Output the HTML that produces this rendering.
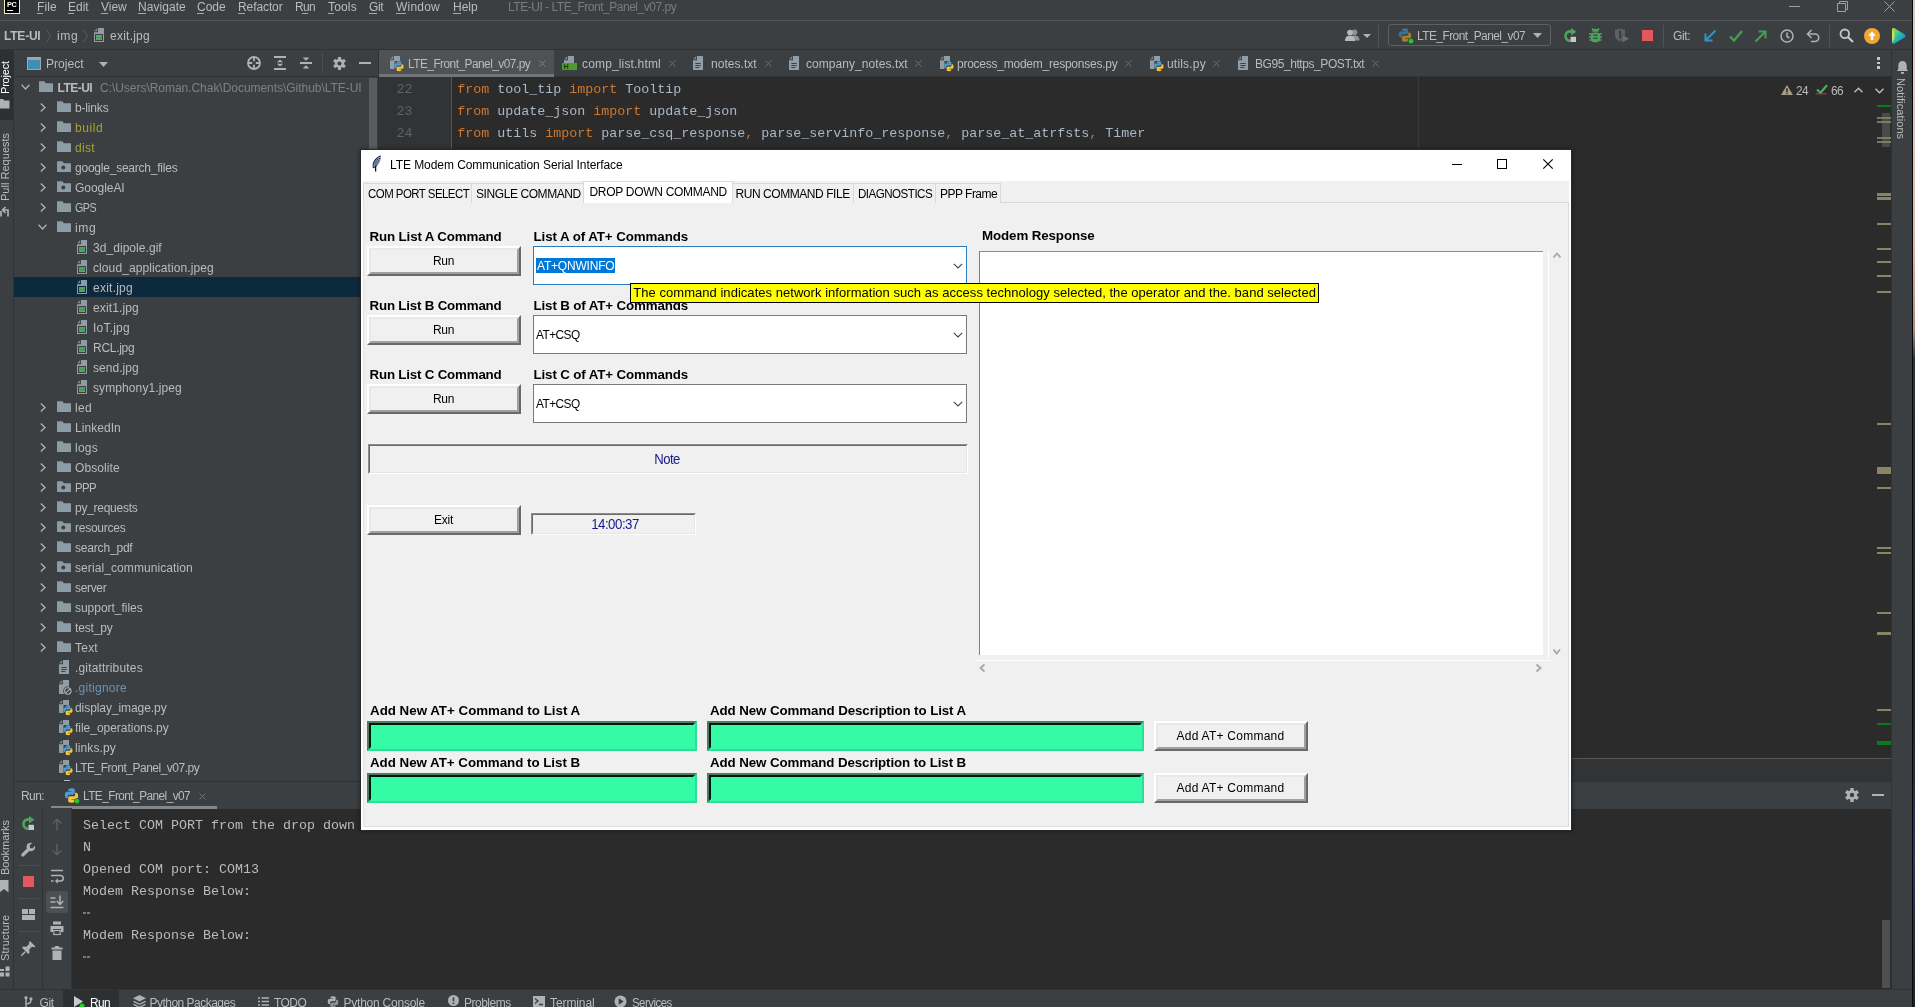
<!DOCTYPE html>
<html><head><meta charset="utf-8"><title>LTE-UI</title><style>
html,body{margin:0;padding:0;}
body{width:1915px;height:1007px;overflow:hidden;background:#3c3f41;position:relative;font-kerning:none;}
body>div,body>span,body>svg{position:absolute;box-sizing:border-box;}
div>div,div>span,div>svg{position:absolute;box-sizing:border-box;}
span{display:block;}
svg{overflow:visible;}
</style></head><body><div id="wrap" style="left:0;top:0;width:1915px;height:1007px;will-change:transform;overflow:hidden;">
<div style="left:0px;top:0px;width:1912px;height:1007px;background:#3c3f41;"></div>
<div style="left:1912px;top:0px;width:1px;height:1007px;background:#0a0a0c;"></div>
<div style="left:1913px;top:0px;width:2px;height:1007px;background:linear-gradient(#d9c9c4 0px,#e6cfc4 60px,#d8b9a8 250px,#a88a7c 330px,#2a3242 360px,#1c2434 700px,#2c3a55 860px,#1a2233 1007px);"></div>
<div style="left:0px;top:20px;width:1912px;height:1px;background:#515557;"></div>
<div style="left:0px;top:49px;width:1912px;height:1px;background:#323232;"></div>
<div style="left:4px;top:0px;width:16px;height:14px;background:#000000;border:1px solid #eeeeb4;border-top:none;"></div>
<span id="t1" style="top:-2px;font:bold 8px/13px 'Liberation Sans',sans-serif;color:#ffffff;white-space:pre;left:6.6px;letter-spacing:-0.550px;transform-origin:0 50%;transform:scaleX(0.9173);">PC</span>
<div style="left:7px;top:10px;width:6px;height:1px;background:#ffffff;"></div>
<span id="t2" style="top:-2px;font:12px/18px 'Liberation Sans',sans-serif;color:#bbbbbb;white-space:pre;left:37.0px;letter-spacing:0.119px;">File</span>
<span id="t3" style="top:-2px;font:12px/18px 'Liberation Sans',sans-serif;color:#bbbbbb;white-space:pre;left:68.0px;letter-spacing:0.004px;">Edit</span>
<span id="t4" style="top:-2px;font:12px/18px 'Liberation Sans',sans-serif;color:#bbbbbb;white-space:pre;left:101.0px;letter-spacing:-0.032px;">View</span>
<span id="t5" style="top:-2px;font:12px/18px 'Liberation Sans',sans-serif;color:#bbbbbb;white-space:pre;left:138.0px;letter-spacing:0.046px;">Navigate</span>
<span id="t6" style="top:-2px;font:12px/18px 'Liberation Sans',sans-serif;color:#bbbbbb;white-space:pre;left:197.0px;letter-spacing:0.004px;">Code</span>
<span id="t7" style="top:-2px;font:12px/18px 'Liberation Sans',sans-serif;color:#bbbbbb;white-space:pre;left:238.0px;letter-spacing:-0.094px;">Refactor</span>
<span id="t8" style="top:-2px;font:12px/18px 'Liberation Sans',sans-serif;color:#bbbbbb;white-space:pre;left:295.0px;letter-spacing:-0.550px;transform-origin:0 50%;transform:scaleX(0.9897);">Run</span>
<span id="t9" style="top:-2px;font:12px/18px 'Liberation Sans',sans-serif;color:#bbbbbb;white-space:pre;left:328.0px;letter-spacing:0.171px;">Tools</span>
<span id="t10" style="top:-2px;font:12px/18px 'Liberation Sans',sans-serif;color:#bbbbbb;white-space:pre;left:369.0px;letter-spacing:-0.322px;">Git</span>
<span id="t11" style="top:-2px;font:12px/18px 'Liberation Sans',sans-serif;color:#bbbbbb;white-space:pre;left:396.0px;letter-spacing:0.203px;">Window</span>
<span id="t12" style="top:-2px;font:12px/18px 'Liberation Sans',sans-serif;color:#bbbbbb;white-space:pre;left:453.0px;letter-spacing:0.004px;">Help</span>
<div style="left:37px;top:13px;width:6px;height:1px;background:#a8a8a8;"></div>
<div style="left:68px;top:13px;width:6px;height:1px;background:#a8a8a8;"></div>
<div style="left:101px;top:13px;width:7px;height:1px;background:#a8a8a8;"></div>
<div style="left:138px;top:13px;width:8px;height:1px;background:#a8a8a8;"></div>
<div style="left:197px;top:13px;width:7px;height:1px;background:#a8a8a8;"></div>
<div style="left:238px;top:13px;width:7px;height:1px;background:#a8a8a8;"></div>
<div style="left:302px;top:13px;width:6px;height:1px;background:#a8a8a8;"></div>
<div style="left:328px;top:13px;width:6px;height:1px;background:#a8a8a8;"></div>
<div style="left:369px;top:13px;width:8px;height:1px;background:#a8a8a8;"></div>
<div style="left:396px;top:13px;width:10px;height:1px;background:#a8a8a8;"></div>
<div style="left:453px;top:13px;width:8px;height:1px;background:#a8a8a8;"></div>
<span id="t13" style="top:-2px;font:12px/18px 'Liberation Sans',sans-serif;color:#787c7f;white-space:pre;left:508.0px;letter-spacing:-0.476px;">LTE-UI - LTE_Front_Panel_v07.py</span>
<div style="left:1789px;top:6px;width:11px;height:1px;background:#9da0a2;"></div>
<svg style="left:1837px;top:1px;" width="11" height="11" viewBox="0 0 11 11"><path d="M0.5 2.5h8v8h-8z M2.5 2.5v-2h8v8h-2" fill="none" stroke="#9da0a2" stroke-width="1"/></svg>
<svg style="left:1884px;top:1px;" width="11" height="11" viewBox="0 0 11 11"><path d="M0.5 0.5l10 10M10.5 0.5l-10 10" fill="none" stroke="#9da0a2" stroke-width="1"/></svg>
<span id="t14" style="top:27px;font:bold 12px/18px 'Liberation Sans',sans-serif;color:#bbbbbb;white-space:pre;left:4.0px;letter-spacing:-0.216px;">LTE-UI</span>
<svg style="left:46px;top:29px;" width="6" height="14" viewBox="0 0 6 14"><path d="M0.5 0.5l4 6.5l-4 6.5" fill="none" stroke="#5a5d5f" stroke-width="1"/></svg>
<span id="t15" style="top:27px;font:12px/18px 'Liberation Sans',sans-serif;color:#bbbbbb;white-space:pre;left:57.0px;letter-spacing:0.550px;transform-origin:0 50%;transform:scaleX(1.0125);">img</span>
<svg style="left:83px;top:29px;" width="6" height="14" viewBox="0 0 6 14"><path d="M0.5 0.5l4 6.5l-4 6.5" fill="none" stroke="#5a5d5f" stroke-width="1"/></svg>
<svg style="left:94px;top:28px;" width="10" height="14" viewBox="0 0 10 14"><path d="M4 0h6v14h-10v-9.700h4z" fill="#9aa7b0" fill-opacity=".9"/><path d="M0 3.300l3.200-3.200v3.200z" fill="#9aa7b0" fill-opacity=".65"/><rect x="1" y="6" width="8" height="7" fill="#3c3f41"/><rect x="2" y="7" width="6" height="5" fill="#59a869"/><path d="M2 10.200l1.500-1l1.500 0.800l1.500-1.200l1.500 0.600v0.900h-6z" fill="#3c8a55"/></svg>
<span id="t16" style="top:27px;font:12px/18px 'Liberation Sans',sans-serif;color:#bbbbbb;white-space:pre;left:110.0px;letter-spacing:0.238px;">exit.jpg</span>
<svg style="left:1345px;top:28.8px;" width="15" height="12" viewBox="0 0 15 12"><circle cx="9.5" cy="3.2" r="2.8" fill="#8e9294"/><path d="M4.5 11.5c0-4 2-5 5-5s5 1 5 5z" fill="#8e9294"/><circle cx="5" cy="3.6" r="2.9" fill="#b6b9bb"/><path d="M0 12c0-4 2-5.2 5-5.2s5 1.2 5 5.2z" fill="#b6b9bb"/></svg>
<svg style="left:1363px;top:34px;" width="8" height="4" viewBox="0 0 8 4"><path d="M0 0h8l-4 4z" fill="#afb1b3"/></svg>
<div style="left:1378px;top:25px;width:1px;height:22px;background:#515355;"></div>
<div style="left:1388px;top:24px;width:163px;height:22px;border:1px solid #5e6162;border-radius:3px;"></div>
<svg style="left:1398px;top:28px;" width="14" height="14" viewBox="0 0 14 14"><path d="M6.9 0.3c-3 0-2.9 1.3-2.9 1.3v1.4h3v0.5h-4.2s-2-0.2-2 3c0 3.100 1.800 3 1.800 3h1v-1.500s-0.100-1.800 1.800-1.800h3s1.700 0 1.700-1.700v-2.700s0.300-1.500-3.200-1.500z" fill="#3f6f93"/><path d="M7.100 13.700c3 0 2.900-1.300 2.900-1.300v-1.400h-3v-0.500h4.200s2 0.200 2-3c0-3.100-1.800-3-1.800-3h-1v1.500s0.100 1.800-1.800 1.800h-3s-1.700 0-1.700 1.700v2.700s-0.300 1.500 3.200 1.500z" fill="#a87d30"/></svg>
<svg style="left:1408px;top:38px;" width="6" height="6" viewBox="0 0 6 6"><circle cx="3" cy="3" r="2.6" fill="#25d125" stroke="#2b4a2b" stroke-width=".6"/></svg>
<span id="t17" style="top:27px;font:12px/18px 'Liberation Sans',sans-serif;color:#bbbbbb;white-space:pre;left:1417.0px;letter-spacing:-0.550px;transform-origin:0 50%;transform:scaleX(0.9946);">LTE_Front_Panel_v07</span>
<svg style="left:1533px;top:33px;" width="9" height="5" viewBox="0 0 9 5"><path d="M0 0h9l-4.500 5z" fill="#afb1b3"/></svg>
<svg style="left:1563px;top:28px;" width="14" height="14" viewBox="0 0 14 14"><path d="M8.500 3.600a4.700 4.700 0 1 0 -1 9.200" fill="none" stroke="#4fa260" stroke-width="2.600"/><path d="M8 0l5.500 3.700l-5.500 3.700z" fill="#4fa260"/><rect x="7.500" y="8.800" width="5.500" height="5.200" fill="#c4c7c9"/></svg>
<svg style="left:1588.5px;top:28px;" width="13" height="15" viewBox="0 0 13 15"><path d="M3.500 3.800a3 3 0 0 1 6 0z" fill="#4fa260"/><rect x="1.800" y="4.600" width="9.400" height="9.600" rx="4" fill="#4fa260"/><path d="M0 6h13M0 9h13M0.500 12h12M3 0.500l1.500 2M10 0.500l-1.500 2" stroke="#4fa260" stroke-width="1.500" fill="none"/><path d="M4.300 7.300h4.400M4.300 10.300h4.400" stroke="#2d5a37" stroke-width="1.500"/></svg>
<svg style="left:1614px;top:28px;" width="16" height="15" viewBox="0 0 16 15"><path d="M1 2l5-1.500l5 1.500v5c0 3-2 5-5 6.500c-3-1.500-5-3.500-5-6.500z" fill="#5e6163"/><rect x="5" y="2.500" width="2.200" height="8" fill="#3c3f41"/><path d="M8 6.500l7.500 4.200l-7.500 4.200z" fill="#6b6e70" stroke="#3c3f41" stroke-width=".6"/></svg>
<div style="left:1642px;top:30px;width:10.5px;height:10.5px;background:#e5575d;"></div>
<div style="left:1663px;top:25px;width:1px;height:22px;background:#515355;"></div>
<span id="t18" style="top:27px;font:12px/18px 'Liberation Sans',sans-serif;color:#bbbbbb;white-space:pre;left:1673.0px;letter-spacing:-0.324px;">Git:</span>
<svg style="left:1703px;top:29px;" width="14" height="14" viewBox="0 0 14 14"><path d="M12.500 1.500l-10 10M2.500 4.500v7h7" fill="none" stroke="#3592c4" stroke-width="2"/></svg>
<svg style="left:1729px;top:29px;" width="14" height="14" viewBox="0 0 14 14"><path d="M1 7.500l4 4l8-9.500" fill="none" stroke="#499c54" stroke-width="2.200"/></svg>
<svg style="left:1754px;top:29px;" width="14" height="14" viewBox="0 0 14 14"><path d="M1.500 12.500l10-10M4.500 2.500h7v7" fill="none" stroke="#499c54" stroke-width="2"/></svg>
<svg style="left:1780px;top:29px;" width="14" height="14" viewBox="0 0 14 14"><circle cx="7" cy="7" r="6" fill="none" stroke="#afb1b3" stroke-width="1.500"/><path d="M7 3.500v4l2.500 1.500" fill="none" stroke="#afb1b3" stroke-width="1.500"/></svg>
<svg style="left:1806px;top:29px;" width="14" height="14" viewBox="0 0 14 14"><path d="M2 5h7a3.700 3.700 0 0 1 0 7.500h-4" fill="none" stroke="#afb1b3" stroke-width="1.600"/><path d="M5.500 1l-4 4l4 4" fill="none" stroke="#afb1b3" stroke-width="1.600"/></svg>
<div style="left:1829px;top:25px;width:1px;height:22px;background:#515355;"></div>
<svg style="left:1839px;top:28px;" width="15" height="15" viewBox="0 0 15 15"><circle cx="5.800" cy="5.800" r="4.300" fill="none" stroke="#c4c6c7" stroke-width="1.800"/><path d="M9 9l5 5" stroke="#c4c6c7" stroke-width="2.200"/></svg>
<svg style="left:1864px;top:28px;" width="16" height="16" viewBox="0 0 16 16"><circle cx="8" cy="8" r="8" fill="#f0a732"/><path d="M8 3.500l4 4.200h-2.700v4.300h-2.600v-4.300h-2.700z" fill="#fff"/></svg>
<svg style="left:1891px;top:28px;" width="15" height="16" viewBox="0 0 15 16"><defs><linearGradient id="jg" x1="0" y1="0" x2="1" y2="1"><stop offset="0" stop-color="#b8e04a"/><stop offset=".45" stop-color="#21c5a0"/><stop offset="1" stop-color="#2a6df0"/></linearGradient></defs><path d="M1 1.500c0-1.500 1.500-1.800 2.500-1.200l10 6c1.200 0.700 1.200 2.400 0 3.100l-10 6c-1 0.600-2.500 0.300-2.500-1.200z" fill="url(#jg)"/><path d="M1 1.500c3 2 4 10 0 12.700z" fill="#ffe14d" fill-opacity=".75"/></svg>
<div style="left:0px;top:50px;width:14px;height:940px;background:#3c3f41;"></div>
<div style="left:13px;top:50px;width:1px;height:940px;background:#323232;"></div>
<div style="left:14px;top:50px;width:365px;height:27px;background:#3c3f41;"></div>
<svg style="left:27px;top:57px;" width="14" height="13" viewBox="0 0 14 13"><rect x="0.5" y="0.5" width="13" height="12" fill="#3d8fb5" stroke="#9aa7b0" stroke-width="1"/><rect x="0.5" y="0.5" width="13" height="2.500" fill="#9aa7b0"/></svg>
<span id="t19" style="top:55px;font:12px/18px 'Liberation Sans',sans-serif;color:#bbbbbb;white-space:pre;left:46.0px;letter-spacing:0.057px;">Project</span>
<svg style="left:99px;top:62px;" width="9" height="5" viewBox="0 0 9 5"><path d="M0 0h9l-4.500 5z" fill="#afb1b3"/></svg>
<svg style="left:247px;top:56px;" width="14" height="14" viewBox="0 0 14 14"><circle cx="7" cy="7" r="6" fill="none" stroke="#afb1b3" stroke-width="1.800"/><path d="M7 1v4.200M7 8.800v4.200M1 7h4.200M8.800 7h4.200" stroke="#afb1b3" stroke-width="1.800"/></svg>
<svg style="left:274px;top:56px;" width="12" height="14" viewBox="0 0 12 14"><path d="M0 1h12M0 13h12" stroke="#afb1b3" stroke-width="2"/><path d="M6 3.500l3.200 2.800h-6.400z M6 10.500l3.200-2.800h-6.400z" fill="#afb1b3"/></svg>
<svg style="left:300px;top:56px;" width="12" height="14" viewBox="0 0 12 14"><path d="M0 7h12" stroke="#afb1b3" stroke-width="2"/><path d="M6 4.800l3.300-3.300h-6.600z M6 9.200l3.300 3.300h-6.600z" fill="#afb1b3"/></svg>
<div style="left:322px;top:53px;width:1px;height:20px;background:#4b4e50;"></div>
<svg style="left:332.5px;top:56.5px;" width="13" height="13" viewBox="0 0 14 14"><g transform="translate(7 7)"><g fill="#afb1b3"><rect x="-1.700" y="-7" width="3.400" height="14" rx=".5"/><rect x="-1.700" y="-7" width="3.400" height="14" rx=".5" transform="rotate(60)"/><rect x="-1.700" y="-7" width="3.400" height="14" rx=".5" transform="rotate(120)"/><circle r="5"/></g><circle r="2.200" fill="#3c3f41"/></g></svg>
<div style="left:359px;top:62px;width:12px;height:2px;background:#afb1b3;"></div>
<div style="left:14px;top:76px;width:365px;height:1px;background:#323232;"></div>
<div style="left:14px;top:77px;width:355px;height:704px;background:#3c3f41;"></div>
<div style="left:14px;top:277px;width:347px;height:20px;background:#0d293e;"></div>
<div style="left:369px;top:78px;width:8px;height:703px;background:#595b5d;"></div>
<div style="left:378px;top:50px;width:1px;height:731px;background:#323232;"></div>
<svg style="left:21px;top:83.8px;" width="9" height="6" viewBox="0 0 9 6"><path d="M0.600 0.800l3.900 4.200l3.900-4.200" fill="none" stroke="#afb1b3" stroke-width="1.300"/></svg>
<svg style="left:39px;top:81.2px;" width="14" height="11" viewBox="0 0 14 11"><path d="M0 0.300h5.300l1.600 1.900h7.100v8.800h-14z" fill="#8d9ba5"/></svg>
<span id="t20" style="top:79px;font:bold 12px/18px 'Liberation Sans',sans-serif;color:#bbbbbb;white-space:pre;left:57.5px;letter-spacing:-0.516px;">LTE-UI</span>
<span id="t21" style="top:79px;font:12px/18px 'Liberation Sans',sans-serif;color:#7d8184;white-space:pre;left:100.0px;letter-spacing:-0.036px;">C:\Users\Roman.Chak\Documents\Github\LTE-UI</span>
<svg style="left:39.5px;top:102.8px;" width="6" height="9" viewBox="0 0 6 9"><path d="M0.800 0.600l4.200 3.900l-4.200 3.900" fill="none" stroke="#afb1b3" stroke-width="1.300"/></svg>
<svg style="left:57px;top:101.2px;" width="14" height="11" viewBox="0 0 14 11"><path d="M0 0.300h5.300l1.600 1.900h7.100v8.800h-14z" fill="#8d9ba5"/></svg>
<span id="t22" style="top:99px;font:12px/18px 'Liberation Sans',sans-serif;color:#bbbbbb;white-space:pre;left:75.0px;letter-spacing:-0.165px;">b-links</span>
<svg style="left:39.5px;top:122.8px;" width="6" height="9" viewBox="0 0 6 9"><path d="M0.800 0.600l4.200 3.900l-4.200 3.900" fill="none" stroke="#afb1b3" stroke-width="1.300"/></svg>
<svg style="left:57px;top:121.2px;" width="14" height="11" viewBox="0 0 14 11"><path d="M0 0.300h5.300l1.600 1.900h7.100v8.800h-14z" fill="#8d9ba5"/></svg>
<span id="t23" style="top:119px;font:12px/18px 'Liberation Sans',sans-serif;color:#a7a32f;white-space:pre;left:75.0px;letter-spacing:0.550px;transform-origin:0 50%;transform:scaleX(1.0051);">build</span>
<svg style="left:39.5px;top:142.8px;" width="6" height="9" viewBox="0 0 6 9"><path d="M0.800 0.600l4.200 3.900l-4.200 3.900" fill="none" stroke="#afb1b3" stroke-width="1.300"/></svg>
<svg style="left:57px;top:141.2px;" width="14" height="11" viewBox="0 0 14 11"><path d="M0 0.300h5.300l1.600 1.900h7.100v8.800h-14z" fill="#8d9ba5"/></svg>
<span id="t24" style="top:139px;font:12px/18px 'Liberation Sans',sans-serif;color:#a7a32f;white-space:pre;left:75.0px;letter-spacing:0.337px;">dist</span>
<svg style="left:39.5px;top:162.8px;" width="6" height="9" viewBox="0 0 6 9"><path d="M0.800 0.600l4.200 3.900l-4.200 3.900" fill="none" stroke="#afb1b3" stroke-width="1.300"/></svg>
<svg style="left:57px;top:161.2px;" width="14" height="11" viewBox="0 0 14 11"><path d="M0 0.300h5.300l1.600 1.900h7.100v8.800h-14z" fill="#8d9ba5"/><circle cx="6.300" cy="6.600" r="2" fill="#3c3f41"/></svg>
<span id="t25" style="top:159px;font:12px/18px 'Liberation Sans',sans-serif;color:#bbbbbb;white-space:pre;left:75.0px;letter-spacing:-0.225px;">google_search_files</span>
<svg style="left:39.5px;top:182.8px;" width="6" height="9" viewBox="0 0 6 9"><path d="M0.800 0.600l4.200 3.900l-4.200 3.900" fill="none" stroke="#afb1b3" stroke-width="1.300"/></svg>
<svg style="left:57px;top:181.2px;" width="14" height="11" viewBox="0 0 14 11"><path d="M0 0.300h5.300l1.600 1.900h7.100v8.800h-14z" fill="#8d9ba5"/><circle cx="6.300" cy="6.600" r="2" fill="#3c3f41"/></svg>
<span id="t26" style="top:179px;font:12px/18px 'Liberation Sans',sans-serif;color:#bbbbbb;white-space:pre;left:75.0px;letter-spacing:-0.050px;">GoogleAI</span>
<svg style="left:39.5px;top:202.8px;" width="6" height="9" viewBox="0 0 6 9"><path d="M0.800 0.600l4.200 3.900l-4.200 3.900" fill="none" stroke="#afb1b3" stroke-width="1.300"/></svg>
<svg style="left:57px;top:201.2px;" width="14" height="11" viewBox="0 0 14 11"><path d="M0 0.300h5.300l1.600 1.900h7.100v8.800h-14z" fill="#8d9ba5"/></svg>
<span id="t27" style="top:199px;font:12px/18px 'Liberation Sans',sans-serif;color:#bbbbbb;white-space:pre;left:75.0px;letter-spacing:-0.550px;transform-origin:0 50%;transform:scaleX(0.8951);">GPS</span>
<svg style="left:37.5px;top:224.10000000000002px;" width="9" height="6" viewBox="0 0 9 6"><path d="M0.600 0.800l3.900 4.200l3.900-4.200" fill="none" stroke="#afb1b3" stroke-width="1.300"/></svg>
<svg style="left:57px;top:221.2px;" width="14" height="11" viewBox="0 0 14 11"><path d="M0 0.300h5.300l1.600 1.900h7.100v8.800h-14z" fill="#8d9ba5"/></svg>
<span id="t28" style="top:219px;font:12px/18px 'Liberation Sans',sans-serif;color:#bbbbbb;white-space:pre;left:75.0px;letter-spacing:0.550px;transform-origin:0 50%;transform:scaleX(1.0125);">img</span>
<svg style="left:77px;top:240px;" width="10" height="14" viewBox="0 0 10 14"><path d="M4 0h6v14h-10v-9.700h4z" fill="#9aa7b0" fill-opacity=".9"/><path d="M0 3.300l3.200-3.200v3.200z" fill="#9aa7b0" fill-opacity=".65"/><rect x="1" y="6" width="8" height="7" fill="#3c3f41"/><rect x="2" y="7" width="6" height="5" fill="#59a869"/><path d="M2 10.200l1.500-1l1.500 0.800l1.500-1.200l1.500 0.600v0.900h-6z" fill="#3c8a55"/><path d="M2.500 8h2M5.500 8h2" stroke="#3f8f5a" stroke-width=".8"/></svg>
<span id="t29" style="top:239px;font:12px/18px 'Liberation Sans',sans-serif;color:#bbbbbb;white-space:pre;left:93.0px;letter-spacing:0.053px;">3d_dipole.gif</span>
<svg style="left:77px;top:260px;" width="10" height="14" viewBox="0 0 10 14"><path d="M4 0h6v14h-10v-9.700h4z" fill="#9aa7b0" fill-opacity=".9"/><path d="M0 3.300l3.200-3.200v3.200z" fill="#9aa7b0" fill-opacity=".65"/><rect x="1" y="6" width="8" height="7" fill="#3c3f41"/><rect x="2" y="7" width="6" height="5" fill="#59a869"/><path d="M2 10.200l1.500-1l1.500 0.800l1.500-1.200l1.500 0.600v0.900h-6z" fill="#3c8a55"/><path d="M2.500 8h2M5.500 8h2" stroke="#3f8f5a" stroke-width=".8"/></svg>
<span id="t30" style="top:259px;font:12px/18px 'Liberation Sans',sans-serif;color:#bbbbbb;white-space:pre;left:93.0px;letter-spacing:0.092px;">cloud_application.jpeg</span>
<svg style="left:77px;top:280px;" width="10" height="14" viewBox="0 0 10 14"><path d="M4 0h6v14h-10v-9.700h4z" fill="#9aa7b0" fill-opacity=".9"/><path d="M0 3.300l3.200-3.200v3.200z" fill="#9aa7b0" fill-opacity=".65"/><rect x="1" y="6" width="8" height="7" fill="#0d293e"/><rect x="2" y="7" width="6" height="5" fill="#59a869"/><path d="M2 10.200l1.500-1l1.500 0.800l1.500-1.200l1.500 0.600v0.900h-6z" fill="#3c8a55"/><path d="M2.500 8h2M5.500 8h2" stroke="#3f8f5a" stroke-width=".8"/></svg>
<span id="t31" style="top:279px;font:12px/18px 'Liberation Sans',sans-serif;color:#bbbbbb;white-space:pre;left:93.0px;letter-spacing:0.238px;">exit.jpg</span>
<svg style="left:77px;top:300px;" width="10" height="14" viewBox="0 0 10 14"><path d="M4 0h6v14h-10v-9.700h4z" fill="#9aa7b0" fill-opacity=".9"/><path d="M0 3.300l3.200-3.200v3.200z" fill="#9aa7b0" fill-opacity=".65"/><rect x="1" y="6" width="8" height="7" fill="#3c3f41"/><rect x="2" y="7" width="6" height="5" fill="#59a869"/><path d="M2 10.200l1.500-1l1.500 0.800l1.500-1.200l1.500 0.600v0.900h-6z" fill="#3c8a55"/><path d="M2.500 8h2M5.500 8h2" stroke="#3f8f5a" stroke-width=".8"/></svg>
<span id="t32" style="top:299px;font:12px/18px 'Liberation Sans',sans-serif;color:#bbbbbb;white-space:pre;left:93.0px;letter-spacing:0.125px;">exit1.jpg</span>
<svg style="left:77px;top:320px;" width="10" height="14" viewBox="0 0 10 14"><path d="M4 0h6v14h-10v-9.700h4z" fill="#9aa7b0" fill-opacity=".9"/><path d="M0 3.300l3.200-3.200v3.200z" fill="#9aa7b0" fill-opacity=".65"/><rect x="1" y="6" width="8" height="7" fill="#3c3f41"/><rect x="2" y="7" width="6" height="5" fill="#59a869"/><path d="M2 10.200l1.500-1l1.500 0.800l1.500-1.200l1.500 0.600v0.900h-6z" fill="#3c8a55"/><path d="M2.500 8h2M5.500 8h2" stroke="#3f8f5a" stroke-width=".8"/></svg>
<span id="t33" style="top:319px;font:12px/18px 'Liberation Sans',sans-serif;color:#bbbbbb;white-space:pre;left:93.0px;letter-spacing:0.223px;">IoT.jpg</span>
<svg style="left:77px;top:340px;" width="10" height="14" viewBox="0 0 10 14"><path d="M4 0h6v14h-10v-9.700h4z" fill="#9aa7b0" fill-opacity=".9"/><path d="M0 3.300l3.200-3.200v3.200z" fill="#9aa7b0" fill-opacity=".65"/><rect x="1" y="6" width="8" height="7" fill="#3c3f41"/><rect x="2" y="7" width="6" height="5" fill="#59a869"/><path d="M2 10.200l1.500-1l1.500 0.800l1.500-1.200l1.500 0.600v0.900h-6z" fill="#3c8a55"/><path d="M2.500 8h2M5.500 8h2" stroke="#3f8f5a" stroke-width=".8"/></svg>
<span id="t34" style="top:339px;font:12px/18px 'Liberation Sans',sans-serif;color:#bbbbbb;white-space:pre;left:93.0px;letter-spacing:-0.277px;">RCL.jpg</span>
<svg style="left:77px;top:360px;" width="10" height="14" viewBox="0 0 10 14"><path d="M4 0h6v14h-10v-9.700h4z" fill="#9aa7b0" fill-opacity=".9"/><path d="M0 3.300l3.200-3.200v3.200z" fill="#9aa7b0" fill-opacity=".65"/><rect x="1" y="6" width="8" height="7" fill="#3c3f41"/><rect x="2" y="7" width="6" height="5" fill="#59a869"/><path d="M2 10.200l1.500-1l1.500 0.800l1.500-1.200l1.500 0.600v0.900h-6z" fill="#3c8a55"/><path d="M2.500 8h2M5.500 8h2" stroke="#3f8f5a" stroke-width=".8"/></svg>
<span id="t35" style="top:359px;font:12px/18px 'Liberation Sans',sans-serif;color:#bbbbbb;white-space:pre;left:93.0px;letter-spacing:0.046px;">send.jpg</span>
<svg style="left:77px;top:380px;" width="10" height="14" viewBox="0 0 10 14"><path d="M4 0h6v14h-10v-9.700h4z" fill="#9aa7b0" fill-opacity=".9"/><path d="M0 3.300l3.200-3.200v3.200z" fill="#9aa7b0" fill-opacity=".65"/><rect x="1" y="6" width="8" height="7" fill="#3c3f41"/><rect x="2" y="7" width="6" height="5" fill="#59a869"/><path d="M2 10.200l1.500-1l1.500 0.800l1.500-1.200l1.500 0.600v0.900h-6z" fill="#3c8a55"/><path d="M2.500 8h2M5.500 8h2" stroke="#3f8f5a" stroke-width=".8"/></svg>
<span id="t36" style="top:379px;font:12px/18px 'Liberation Sans',sans-serif;color:#bbbbbb;white-space:pre;left:93.0px;letter-spacing:0.101px;">symphony1.jpeg</span>
<svg style="left:39.5px;top:402.8px;" width="6" height="9" viewBox="0 0 6 9"><path d="M0.800 0.600l4.200 3.900l-4.200 3.900" fill="none" stroke="#afb1b3" stroke-width="1.300"/></svg>
<svg style="left:57px;top:401.2px;" width="14" height="11" viewBox="0 0 14 11"><path d="M0 0.300h5.300l1.600 1.900h7.100v8.800h-14z" fill="#8d9ba5"/></svg>
<span id="t37" style="top:399px;font:12px/18px 'Liberation Sans',sans-serif;color:#bbbbbb;white-space:pre;left:75.0px;letter-spacing:0.342px;">led</span>
<svg style="left:39.5px;top:422.8px;" width="6" height="9" viewBox="0 0 6 9"><path d="M0.800 0.600l4.200 3.900l-4.200 3.900" fill="none" stroke="#afb1b3" stroke-width="1.300"/></svg>
<svg style="left:57px;top:421.2px;" width="14" height="11" viewBox="0 0 14 11"><path d="M0 0.300h5.300l1.600 1.900h7.100v8.800h-14z" fill="#8d9ba5"/></svg>
<span id="t38" style="top:419px;font:12px/18px 'Liberation Sans',sans-serif;color:#bbbbbb;white-space:pre;left:75.0px;letter-spacing:0.046px;">LinkedIn</span>
<svg style="left:39.5px;top:442.8px;" width="6" height="9" viewBox="0 0 6 9"><path d="M0.800 0.600l4.200 3.900l-4.200 3.900" fill="none" stroke="#afb1b3" stroke-width="1.300"/></svg>
<svg style="left:57px;top:441.2px;" width="14" height="11" viewBox="0 0 14 11"><path d="M0 0.300h5.300l1.600 1.900h7.100v8.800h-14z" fill="#8d9ba5"/></svg>
<span id="t39" style="top:439px;font:12px/18px 'Liberation Sans',sans-serif;color:#bbbbbb;white-space:pre;left:75.0px;letter-spacing:0.228px;">logs</span>
<svg style="left:39.5px;top:462.8px;" width="6" height="9" viewBox="0 0 6 9"><path d="M0.800 0.600l4.200 3.900l-4.200 3.900" fill="none" stroke="#afb1b3" stroke-width="1.300"/></svg>
<svg style="left:57px;top:461.2px;" width="14" height="11" viewBox="0 0 14 11"><path d="M0 0.300h5.300l1.600 1.900h7.100v8.800h-14z" fill="#8d9ba5"/></svg>
<span id="t40" style="top:459px;font:12px/18px 'Liberation Sans',sans-serif;color:#bbbbbb;white-space:pre;left:75.0px;letter-spacing:0.096px;">Obsolite</span>
<svg style="left:39.5px;top:482.8px;" width="6" height="9" viewBox="0 0 6 9"><path d="M0.800 0.600l4.200 3.900l-4.200 3.900" fill="none" stroke="#afb1b3" stroke-width="1.300"/></svg>
<svg style="left:57px;top:481.2px;" width="14" height="11" viewBox="0 0 14 11"><path d="M0 0.300h5.300l1.600 1.900h7.100v8.800h-14z" fill="#8d9ba5"/><circle cx="6.300" cy="6.600" r="2" fill="#3c3f41"/></svg>
<span id="t41" style="top:479px;font:12px/18px 'Liberation Sans',sans-serif;color:#bbbbbb;white-space:pre;left:75.0px;letter-spacing:-0.550px;transform-origin:0 50%;transform:scaleX(0.9470);">PPP</span>
<svg style="left:39.5px;top:502.8px;" width="6" height="9" viewBox="0 0 6 9"><path d="M0.800 0.600l4.200 3.900l-4.200 3.900" fill="none" stroke="#afb1b3" stroke-width="1.300"/></svg>
<svg style="left:57px;top:501.2px;" width="14" height="11" viewBox="0 0 14 11"><path d="M0 0.300h5.300l1.600 1.900h7.100v8.800h-14z" fill="#8d9ba5"/></svg>
<span id="t42" style="top:499px;font:12px/18px 'Liberation Sans',sans-serif;color:#bbbbbb;white-space:pre;left:75.0px;letter-spacing:-0.267px;">py_requests</span>
<svg style="left:39.5px;top:522.8px;" width="6" height="9" viewBox="0 0 6 9"><path d="M0.800 0.600l4.200 3.900l-4.200 3.900" fill="none" stroke="#afb1b3" stroke-width="1.300"/></svg>
<svg style="left:57px;top:521.2px;" width="14" height="11" viewBox="0 0 14 11"><path d="M0 0.300h5.300l1.600 1.900h7.100v8.800h-14z" fill="#8d9ba5"/><circle cx="6.300" cy="6.600" r="2" fill="#3c3f41"/></svg>
<span id="t43" style="top:519px;font:12px/18px 'Liberation Sans',sans-serif;color:#bbbbbb;white-space:pre;left:75.0px;letter-spacing:-0.248px;">resources</span>
<svg style="left:39.5px;top:542.8px;" width="6" height="9" viewBox="0 0 6 9"><path d="M0.800 0.600l4.200 3.900l-4.200 3.900" fill="none" stroke="#afb1b3" stroke-width="1.300"/></svg>
<svg style="left:57px;top:541.2px;" width="14" height="11" viewBox="0 0 14 11"><path d="M0 0.300h5.300l1.600 1.900h7.100v8.800h-14z" fill="#8d9ba5"/></svg>
<span id="t44" style="top:539px;font:12px/18px 'Liberation Sans',sans-serif;color:#bbbbbb;white-space:pre;left:75.0px;letter-spacing:-0.186px;">search_pdf</span>
<svg style="left:39.5px;top:562.8px;" width="6" height="9" viewBox="0 0 6 9"><path d="M0.800 0.600l4.200 3.900l-4.200 3.900" fill="none" stroke="#afb1b3" stroke-width="1.300"/></svg>
<svg style="left:57px;top:561.2px;" width="14" height="11" viewBox="0 0 14 11"><path d="M0 0.300h5.300l1.600 1.900h7.100v8.800h-14z" fill="#8d9ba5"/><circle cx="6.300" cy="6.600" r="2" fill="#3c3f41"/></svg>
<span id="t45" style="top:559px;font:12px/18px 'Liberation Sans',sans-serif;color:#bbbbbb;white-space:pre;left:75.0px;letter-spacing:0.086px;">serial_communication</span>
<svg style="left:39.5px;top:582.8px;" width="6" height="9" viewBox="0 0 6 9"><path d="M0.800 0.600l4.200 3.900l-4.200 3.900" fill="none" stroke="#afb1b3" stroke-width="1.300"/></svg>
<svg style="left:57px;top:581.2px;" width="14" height="11" viewBox="0 0 14 11"><path d="M0 0.300h5.300l1.600 1.900h7.100v8.800h-14z" fill="#8d9ba5"/></svg>
<span id="t46" style="top:579px;font:12px/18px 'Liberation Sans',sans-serif;color:#bbbbbb;white-space:pre;left:75.0px;letter-spacing:-0.329px;">server</span>
<svg style="left:39.5px;top:602.8px;" width="6" height="9" viewBox="0 0 6 9"><path d="M0.800 0.600l4.200 3.900l-4.200 3.900" fill="none" stroke="#afb1b3" stroke-width="1.300"/></svg>
<svg style="left:57px;top:601.2px;" width="14" height="11" viewBox="0 0 14 11"><path d="M0 0.300h5.300l1.600 1.900h7.100v8.800h-14z" fill="#8d9ba5"/></svg>
<span id="t47" style="top:599px;font:12px/18px 'Liberation Sans',sans-serif;color:#bbbbbb;white-space:pre;left:75.0px;letter-spacing:-0.029px;">support_files</span>
<svg style="left:39.5px;top:622.8px;" width="6" height="9" viewBox="0 0 6 9"><path d="M0.800 0.600l4.200 3.900l-4.200 3.900" fill="none" stroke="#afb1b3" stroke-width="1.300"/></svg>
<svg style="left:57px;top:621.2px;" width="14" height="11" viewBox="0 0 14 11"><path d="M0 0.300h5.300l1.600 1.900h7.100v8.800h-14z" fill="#8d9ba5"/></svg>
<span id="t48" style="top:619px;font:12px/18px 'Liberation Sans',sans-serif;color:#bbbbbb;white-space:pre;left:75.0px;letter-spacing:-0.167px;">test_py</span>
<svg style="left:39.5px;top:642.8px;" width="6" height="9" viewBox="0 0 6 9"><path d="M0.800 0.600l4.200 3.900l-4.200 3.900" fill="none" stroke="#afb1b3" stroke-width="1.300"/></svg>
<svg style="left:57px;top:641.2px;" width="14" height="11" viewBox="0 0 14 11"><path d="M0 0.300h5.300l1.600 1.900h7.100v8.800h-14z" fill="#8d9ba5"/></svg>
<span id="t49" style="top:639px;font:12px/18px 'Liberation Sans',sans-serif;color:#bbbbbb;white-space:pre;left:75.0px;letter-spacing:0.228px;">Text</span>
<svg style="left:59px;top:660px;" width="10" height="14" viewBox="0 0 10 14"><path d="M4 0h6v14h-10v-9.700h4z" fill="#9aa7b0" fill-opacity=".9"/><path d="M0 3.300l3.200-3.200v3.200z" fill="#9aa7b0" fill-opacity=".65"/><path d="M2.300 7.500h5.400M2.300 9.500h5.400M2.300 11.500h4" stroke="#3c3f41" stroke-width="1"/></svg>
<span id="t50" style="top:659px;font:12px/18px 'Liberation Sans',sans-serif;color:#bbbbbb;white-space:pre;left:75.0px;letter-spacing:0.179px;">.gitattributes</span>
<svg style="left:59px;top:680px;" width="14" height="16" viewBox="0 0 14 16"><path d="M4 0h6v14h-10v-9.700h4z" fill="#9aa7b0" fill-opacity=".9"/><path d="M0 3.300l3.200-3.200v3.200z" fill="#9aa7b0" fill-opacity=".65"/><circle cx="8.800" cy="11" r="4.600" fill="#3c3f41"/><circle cx="8.800" cy="11" r="3.200" fill="none" stroke="#a9b3ba" stroke-width="1.100"/><path d="M6.600 13.200l4.400-4.400" stroke="#a9b3ba" stroke-width="1.100"/></svg>
<span id="t51" style="top:679px;font:12px/18px 'Liberation Sans',sans-serif;color:#6c93b5;white-space:pre;left:75.0px;letter-spacing:0.258px;">.gitignore</span>
<svg style="left:59px;top:700px;" width="14" height="16" viewBox="0 0 14 16"><path d="M4 0h6v5h-5.500v8h-4.500v-8.700h4z" fill="#9aa7b0" fill-opacity=".9"/><path d="M0 3.300l3.200-3.200v3.200z" fill="#9aa7b0" fill-opacity=".65"/><g transform="translate(3.800 5) scale(.74)"><path d="M6.900 0.300c-3 0-2.900 1.300-2.900 1.300v1.400h3v0.500h-4.200s-2-0.200-2 3c0 3.100 1.800 3 1.800 3h1v-1.500s-0.100-1.800 1.800-1.800h3s1.700 0 1.700-1.700v-2.700s0.300-1.500-3.200-1.500z" fill="#4d9ad4"/><path d="M7.100 13.700c3 0 2.900-1.300 2.900-1.300v-1.400h-3v-0.500h4.200s2 0.200 2-3c0-3.100-1.800-3-1.800-3h-1v1.500s0.100 1.800-1.800 1.800h-3s-1.700 0-1.700 1.700v2.700s-0.300 1.500 3.200 1.500z" fill="#f2c83a"/></g></svg>
<span id="t52" style="top:699px;font:12px/18px 'Liberation Sans',sans-serif;color:#bbbbbb;white-space:pre;left:75.0px;letter-spacing:-0.068px;">display_image.py</span>
<svg style="left:59px;top:720px;" width="14" height="16" viewBox="0 0 14 16"><path d="M4 0h6v5h-5.500v8h-4.500v-8.700h4z" fill="#9aa7b0" fill-opacity=".9"/><path d="M0 3.300l3.200-3.200v3.200z" fill="#9aa7b0" fill-opacity=".65"/><g transform="translate(3.800 5) scale(.74)"><path d="M6.900 0.300c-3 0-2.900 1.300-2.900 1.300v1.400h3v0.500h-4.200s-2-0.200-2 3c0 3.100 1.800 3 1.800 3h1v-1.500s-0.100-1.800 1.800-1.800h3s1.700 0 1.700-1.700v-2.700s0.300-1.500-3.200-1.500z" fill="#4d9ad4"/><path d="M7.100 13.700c3 0 2.900-1.300 2.900-1.300v-1.400h-3v-0.500h4.200s2 0.200 2-3c0-3.100-1.800-3-1.800-3h-1v1.500s0.100 1.800-1.800 1.800h-3s-1.700 0-1.700 1.700v2.700s-0.300 1.500 3.200 1.500z" fill="#f2c83a"/></g></svg>
<span id="t53" style="top:719px;font:12px/18px 'Liberation Sans',sans-serif;color:#bbbbbb;white-space:pre;left:75.0px;letter-spacing:-0.021px;">file_operations.py</span>
<svg style="left:59px;top:740px;" width="14" height="16" viewBox="0 0 14 16"><path d="M4 0h6v5h-5.500v8h-4.500v-8.700h4z" fill="#9aa7b0" fill-opacity=".9"/><path d="M0 3.300l3.200-3.200v3.200z" fill="#9aa7b0" fill-opacity=".65"/><g transform="translate(3.800 5) scale(.74)"><path d="M6.900 0.300c-3 0-2.900 1.300-2.900 1.300v1.400h3v0.500h-4.200s-2-0.200-2 3c0 3.100 1.800 3 1.800 3h1v-1.500s-0.100-1.800 1.800-1.800h3s1.700 0 1.700-1.700v-2.700s0.300-1.500-3.200-1.500z" fill="#4d9ad4"/><path d="M7.100 13.700c3 0 2.900-1.300 2.900-1.300v-1.400h-3v-0.500h4.200s2 0.200 2-3c0-3.100-1.800-3-1.800-3h-1v1.500s0.100 1.800-1.800 1.800h-3s-1.700 0-1.700 1.700v2.700s-0.300 1.500 3.200 1.500z" fill="#f2c83a"/></g></svg>
<span id="t54" style="top:739px;font:12px/18px 'Liberation Sans',sans-serif;color:#bbbbbb;white-space:pre;left:75.0px;letter-spacing:0.098px;">links.py</span>
<svg style="left:59px;top:760px;" width="14" height="16" viewBox="0 0 14 16"><path d="M4 0h6v5h-5.500v8h-4.500v-8.700h4z" fill="#9aa7b0" fill-opacity=".9"/><path d="M0 3.300l3.200-3.200v3.200z" fill="#9aa7b0" fill-opacity=".65"/><g transform="translate(3.800 5) scale(.74)"><path d="M6.900 0.300c-3 0-2.900 1.300-2.900 1.300v1.400h3v0.500h-4.200s-2-0.200-2 3c0 3.100 1.800 3 1.800 3h1v-1.500s-0.100-1.800 1.800-1.800h3s1.700 0 1.700-1.700v-2.700s0.300-1.500-3.200-1.500z" fill="#4d9ad4"/><path d="M7.100 13.700c3 0 2.900-1.300 2.900-1.300v-1.400h-3v-0.500h4.200s2 0.200 2-3c0-3.100-1.800-3-1.800-3h-1v1.500s0.100 1.800-1.800 1.800h-3s-1.700 0-1.700 1.700v2.700s-0.300 1.500 3.200 1.500z" fill="#f2c83a"/></g></svg>
<span id="t55" style="top:759px;font:12px/18px 'Liberation Sans',sans-serif;color:#bbbbbb;white-space:pre;left:75.0px;letter-spacing:-0.500px;">LTE_Front_Panel_v07.py</span>
<div style="left:379px;top:50px;width:1513px;height:27px;background:#3c3f41;"></div>
<div style="left:379px;top:76px;width:1513px;height:1px;background:#323232;"></div>
<div style="left:379px;top:50px;width:175px;height:27px;background:#4e5254;"></div>
<div style="left:379px;top:74px;width:175px;height:3px;background:#71757a;"></div>
<svg style="left:390px;top:56px;" width="14" height="16" viewBox="0 0 14 16"><path d="M4 0h6v5h-5.500v8h-4.500v-8.700h4z" fill="#9aa7b0" fill-opacity=".9"/><path d="M0 3.300l3.200-3.200v3.200z" fill="#9aa7b0" fill-opacity=".65"/><g transform="translate(3.800 5) scale(.74)"><path d="M6.900 0.300c-3 0-2.900 1.300-2.900 1.300v1.400h3v0.500h-4.200s-2-0.200-2 3c0 3.100 1.800 3 1.800 3h1v-1.500s-0.100-1.800 1.800-1.800h3s1.700 0 1.700-1.700v-2.700s0.300-1.500-3.200-1.500z" fill="#4d9ad4"/><path d="M7.100 13.700c3 0 2.900-1.300 2.900-1.300v-1.400h-3v-0.500h4.200s2 0.200 2-3c0-3.100-1.800-3-1.800-3h-1v1.500s0.100 1.800-1.800 1.800h-3s-1.700 0-1.700 1.700v2.700s-0.300 1.500 3.200 1.500z" fill="#f2c83a"/></g></svg>
<span id="t56" style="top:55px;font:12px/18px 'Liberation Sans',sans-serif;color:#bbbbbb;white-space:pre;left:407.5px;letter-spacing:-0.550px;transform-origin:0 50%;transform:scaleX(0.9923);">LTE_Front_Panel_v07.py</span>
<svg style="left:538.5px;top:60.0px;" width="7" height="7" viewBox="0 0 7 7"><path d="M0.500 0.500l6 6M6.500 0.500l-6 6" stroke="#7e8284" stroke-width="1"/></svg>
<svg style="left:562px;top:56px;" width="15" height="14" viewBox="0 0 15 14"><path d="M6 0h6v7h-10v-2.700h4z" fill="#9aa7b0" fill-opacity=".9"/><path d="M2 3.300l3.200-3.200v3.200z" fill="#9aa7b0" fill-opacity=".65"/><rect x="0" y="7" width="15" height="7" fill="#4e9a2d"/><path d="M2.500 8.300v4.400M5.700 8.300v4.400M2.500 10.500h3.200" stroke="#1e3a12" stroke-width="1.100"/></svg>
<span id="t57" style="top:55px;font:12px/18px 'Liberation Sans',sans-serif;color:#bbbbbb;white-space:pre;left:582.0px;letter-spacing:0.155px;">comp_list.html</span>
<svg style="left:668.5px;top:60.0px;" width="7" height="7" viewBox="0 0 7 7"><path d="M0.500 0.500l6 6M6.500 0.500l-6 6" stroke="#6e7072" stroke-width="1"/></svg>
<svg style="left:693px;top:56px;" width="10" height="14" viewBox="0 0 10 14"><path d="M4 0h6v14h-10v-9.700h4z" fill="#9aa7b0" fill-opacity=".9"/><path d="M0 3.300l3.200-3.200v3.200z" fill="#9aa7b0" fill-opacity=".65"/><path d="M2.300 7.500h5.400M2.300 9.500h5.400M2.300 11.500h4" stroke="#3c3f41" stroke-width="1"/></svg>
<span id="t58" style="top:55px;font:12px/18px 'Liberation Sans',sans-serif;color:#bbbbbb;white-space:pre;left:711.0px;letter-spacing:0.043px;">notes.txt</span>
<svg style="left:764.5px;top:60.0px;" width="7" height="7" viewBox="0 0 7 7"><path d="M0.500 0.500l6 6M6.500 0.500l-6 6" stroke="#6e7072" stroke-width="1"/></svg>
<svg style="left:789px;top:56px;" width="10" height="14" viewBox="0 0 10 14"><path d="M4 0h6v14h-10v-9.700h4z" fill="#9aa7b0" fill-opacity=".9"/><path d="M0 3.300l3.200-3.200v3.200z" fill="#9aa7b0" fill-opacity=".65"/><path d="M2.300 7.500h5.400M2.300 9.500h5.400M2.300 11.500h4" stroke="#3c3f41" stroke-width="1"/></svg>
<span id="t59" style="top:55px;font:12px/18px 'Liberation Sans',sans-serif;color:#bbbbbb;white-space:pre;left:806.0px;letter-spacing:0.060px;">company_notes.txt</span>
<svg style="left:914.5px;top:60.0px;" width="7" height="7" viewBox="0 0 7 7"><path d="M0.500 0.500l6 6M6.500 0.500l-6 6" stroke="#6e7072" stroke-width="1"/></svg>
<svg style="left:940px;top:56px;" width="14" height="16" viewBox="0 0 14 16"><path d="M4 0h6v5h-5.500v8h-4.500v-8.700h4z" fill="#9aa7b0" fill-opacity=".9"/><path d="M0 3.300l3.200-3.200v3.200z" fill="#9aa7b0" fill-opacity=".65"/><g transform="translate(3.800 5) scale(.74)"><path d="M6.900 0.300c-3 0-2.900 1.300-2.900 1.300v1.400h3v0.500h-4.200s-2-0.200-2 3c0 3.100 1.800 3 1.800 3h1v-1.500s-0.100-1.800 1.800-1.800h3s1.700 0 1.700-1.700v-2.700s0.300-1.500-3.200-1.500z" fill="#4d9ad4"/><path d="M7.100 13.700c3 0 2.900-1.300 2.900-1.300v-1.400h-3v-0.500h4.200s2 0.200 2-3c0-3.100-1.800-3-1.800-3h-1v1.500s0.100 1.800-1.800 1.800h-3s-1.700 0-1.700 1.700v2.700s-0.300 1.500 3.200 1.500z" fill="#f2c83a"/></g></svg>
<span id="t60" style="top:55px;font:12px/18px 'Liberation Sans',sans-serif;color:#bbbbbb;white-space:pre;left:957.0px;letter-spacing:-0.243px;">process_modem_responses.py</span>
<svg style="left:1125.0px;top:60.0px;" width="7" height="7" viewBox="0 0 7 7"><path d="M0.500 0.500l6 6M6.500 0.500l-6 6" stroke="#6e7072" stroke-width="1"/></svg>
<svg style="left:1150px;top:56px;" width="14" height="16" viewBox="0 0 14 16"><path d="M4 0h6v5h-5.500v8h-4.500v-8.700h4z" fill="#9aa7b0" fill-opacity=".9"/><path d="M0 3.300l3.200-3.200v3.200z" fill="#9aa7b0" fill-opacity=".65"/><g transform="translate(3.800 5) scale(.74)"><path d="M6.900 0.300c-3 0-2.900 1.300-2.900 1.300v1.400h3v0.500h-4.200s-2-0.200-2 3c0 3.100 1.800 3 1.800 3h1v-1.500s-0.100-1.800 1.800-1.800h3s1.700 0 1.700-1.700v-2.700s0.300-1.500-3.200-1.500z" fill="#4d9ad4"/><path d="M7.100 13.700c3 0 2.900-1.300 2.900-1.300v-1.400h-3v-0.500h4.200s2 0.200 2-3c0-3.100-1.800-3-1.800-3h-1v1.500s0.100 1.800-1.800 1.800h-3s-1.700 0-1.700 1.700v2.700s-0.300 1.500 3.200 1.500z" fill="#f2c83a"/></g></svg>
<span id="t61" style="top:55px;font:12px/18px 'Liberation Sans',sans-serif;color:#bbbbbb;white-space:pre;left:1167.0px;letter-spacing:0.192px;">utils.py</span>
<svg style="left:1212.5px;top:60.0px;" width="7" height="7" viewBox="0 0 7 7"><path d="M0.500 0.500l6 6M6.500 0.500l-6 6" stroke="#6e7072" stroke-width="1"/></svg>
<svg style="left:1238px;top:56px;" width="10" height="14" viewBox="0 0 10 14"><path d="M4 0h6v14h-10v-9.700h4z" fill="#9aa7b0" fill-opacity=".9"/><path d="M0 3.300l3.200-3.200v3.200z" fill="#9aa7b0" fill-opacity=".65"/><path d="M2.300 7.500h5.400M2.300 9.500h5.400M2.300 11.500h4" stroke="#3c3f41" stroke-width="1"/></svg>
<span id="t62" style="top:55px;font:12px/18px 'Liberation Sans',sans-serif;color:#bbbbbb;white-space:pre;left:1255.0px;letter-spacing:-0.428px;">BG95_https_POST.txt</span>
<svg style="left:1371.5px;top:60.0px;" width="7" height="7" viewBox="0 0 7 7"><path d="M0.500 0.500l6 6M6.500 0.500l-6 6" stroke="#6e7072" stroke-width="1"/></svg>
<div style="left:1877.3px;top:57px;width:2.8px;height:2.8px;background:#c3c5c6;"></div>
<div style="left:1877.3px;top:61.5px;width:2.8px;height:2.8px;background:#c3c5c6;"></div>
<div style="left:1877.3px;top:66px;width:2.8px;height:2.8px;background:#c3c5c6;"></div>
<div style="left:379px;top:77px;width:1513px;height:681px;background:#2b2b2b;"></div>
<div style="left:379px;top:77px;width:72px;height:681px;background:#313335;"></div>
<div style="left:451px;top:77px;width:1px;height:681px;background:#555555;"></div>
<div style="left:1418px;top:77px;width:1px;height:681px;background:#393939;"></div>
<span id="t63" style="top:80px;font:13.33px/19px 'Liberation Mono',monospace;color:#606366;white-space:pre;left:412.5px;transform:translateX(-100%);">22</span>
<span id="t64" style="top:80px;font:13.33px/19px 'Liberation Mono',monospace;color:#cc7832;white-space:pre;left:457.3px;">from</span>
<span id="t65" style="top:80px;font:13.33px/19px 'Liberation Mono',monospace;color:#a9b7c6;white-space:pre;left:489.3px;"> tool_tip </span>
<span id="t66" style="top:80px;font:13.33px/19px 'Liberation Mono',monospace;color:#cc7832;white-space:pre;left:569.3px;">import</span>
<span id="t67" style="top:80px;font:13.33px/19px 'Liberation Mono',monospace;color:#a9b7c6;white-space:pre;left:617.3px;"> Tooltip</span>
<span id="t68" style="top:102px;font:13.33px/19px 'Liberation Mono',monospace;color:#606366;white-space:pre;left:412.5px;transform:translateX(-100%);">23</span>
<span id="t69" style="top:102px;font:13.33px/19px 'Liberation Mono',monospace;color:#cc7832;white-space:pre;left:457.3px;">from</span>
<span id="t70" style="top:102px;font:13.33px/19px 'Liberation Mono',monospace;color:#a9b7c6;white-space:pre;left:489.3px;"> update_json </span>
<span id="t71" style="top:102px;font:13.33px/19px 'Liberation Mono',monospace;color:#cc7832;white-space:pre;left:593.3px;">import</span>
<span id="t72" style="top:102px;font:13.33px/19px 'Liberation Mono',monospace;color:#a9b7c6;white-space:pre;left:641.3px;"> update_json</span>
<span id="t73" style="top:124px;font:13.33px/19px 'Liberation Mono',monospace;color:#606366;white-space:pre;left:412.5px;transform:translateX(-100%);">24</span>
<span id="t74" style="top:124px;font:13.33px/19px 'Liberation Mono',monospace;color:#cc7832;white-space:pre;left:457.3px;">from</span>
<span id="t75" style="top:124px;font:13.33px/19px 'Liberation Mono',monospace;color:#a9b7c6;white-space:pre;left:489.3px;"> utils </span>
<span id="t76" style="top:124px;font:13.33px/19px 'Liberation Mono',monospace;color:#cc7832;white-space:pre;left:545.3px;">import</span>
<span id="t77" style="top:124px;font:13.33px/19px 'Liberation Mono',monospace;color:#a9b7c6;white-space:pre;left:593.3px;"> parse_csq_response</span>
<span id="t78" style="top:124px;font:13.33px/19px 'Liberation Mono',monospace;color:#cc7832;white-space:pre;left:745.3px;">,</span>
<span id="t79" style="top:124px;font:13.33px/19px 'Liberation Mono',monospace;color:#a9b7c6;white-space:pre;left:753.3px;"> parse_servinfo_response</span>
<span id="t80" style="top:124px;font:13.33px/19px 'Liberation Mono',monospace;color:#cc7832;white-space:pre;left:945.3px;">,</span>
<span id="t81" style="top:124px;font:13.33px/19px 'Liberation Mono',monospace;color:#a9b7c6;white-space:pre;left:953.3px;"> parse_at_atrfsts</span>
<span id="t82" style="top:124px;font:13.33px/19px 'Liberation Mono',monospace;color:#cc7832;white-space:pre;left:1089.3px;">,</span>
<span id="t83" style="top:124px;font:13.33px/19px 'Liberation Mono',monospace;color:#a9b7c6;white-space:pre;left:1097.3px;"> Timer</span>
<svg style="left:1781px;top:85px;" width="12" height="10" viewBox="0 0 12 10"><path d="M6 0l6 10h-12z" fill="#a59d84"/><path d="M6 3.300v3.700" stroke="#2b2b2b" stroke-width="1.500"/><rect x="5.250" y="7.800" width="1.500" height="1.300" fill="#2b2b2b"/></svg>
<span id="t84" style="top:82px;font:12px/18px 'Liberation Sans',sans-serif;color:#bbbbbb;white-space:pre;left:1796.0px;letter-spacing:-0.550px;transform-origin:0 50%;transform:scaleX(0.9915);">24</span>
<svg style="left:1816px;top:84px;" width="12" height="12" viewBox="0 0 12 12"><path d="M1 5.500l3.500 3.200l6.500-7.500" fill="none" stroke="#49b257" stroke-width="2.200"/><path d="M0 10.500l1.500-1.500l1.500 1.500l1.500-1.500l1.500 1.500l1.500-1.500l1.500 1.500l1.500-1.500" fill="none" stroke="#e0464f" stroke-width=".9"/></svg>
<span id="t85" style="top:82px;font:12px/18px 'Liberation Sans',sans-serif;color:#bbbbbb;white-space:pre;left:1831.0px;letter-spacing:-0.550px;transform-origin:0 50%;transform:scaleX(0.9915);">66</span>
<svg style="left:1854px;top:87px;" width="9" height="6" viewBox="0 0 9 6"><path d="M0.500 5.300l4-4l4 4" fill="none" stroke="#bbbbbb" stroke-width="1.500"/></svg>
<svg style="left:1875px;top:88px;" width="9" height="6" viewBox="0 0 9 6"><path d="M0.500 0.700l4 4l4-4" fill="none" stroke="#bbbbbb" stroke-width="1.500"/></svg>
<div style="left:1882px;top:113px;width:8px;height:34px;background:#4a4a4a;"></div>
<div style="left:1877px;top:105px;width:14px;height:2px;background:#0a7a1f;"></div>
<div style="left:1877px;top:117px;width:14px;height:2px;background:#8a8467;opacity:.85;"></div>
<div style="left:1877px;top:121px;width:14px;height:2px;background:#8a8467;opacity:.85;"></div>
<div style="left:1877px;top:137px;width:14px;height:2px;background:#8a8467;opacity:.85;"></div>
<div style="left:1877px;top:141px;width:14px;height:2px;background:#8a8467;opacity:.85;"></div>
<div style="left:1877px;top:193px;width:14px;height:3px;background:#8a8467;"></div>
<div style="left:1877px;top:196.5px;width:14px;height:3px;background:#8a8467;"></div>
<div style="left:1877px;top:223px;width:14px;height:2px;background:#8a8467;"></div>
<div style="left:1877px;top:248px;width:14px;height:2px;background:#8a8467;"></div>
<div style="left:1877px;top:261px;width:14px;height:2px;background:#8a8467;"></div>
<div style="left:1877px;top:275px;width:14px;height:2px;background:#8a8467;"></div>
<div style="left:1877px;top:291px;width:14px;height:2px;background:#8a8467;"></div>
<div style="left:1877px;top:423px;width:14px;height:2px;background:#8a8467;"></div>
<div style="left:1877px;top:467px;width:14px;height:7px;background:#8a8467;"></div>
<div style="left:1877px;top:487px;width:14px;height:2px;background:#8a8467;"></div>
<div style="left:1877px;top:547px;width:14px;height:2px;background:#8a8467;"></div>
<div style="left:1877px;top:552px;width:14px;height:2px;background:#8a8467;"></div>
<div style="left:1877px;top:612px;width:14px;height:2px;background:#8a8467;"></div>
<div style="left:1877px;top:632px;width:14px;height:3px;background:#8a8467;"></div>
<div style="left:1877px;top:709px;width:14px;height:2px;background:#8a8467;"></div>
<div style="left:1877px;top:723px;width:14px;height:2px;background:#0a7a1f;"></div>
<div style="left:1877px;top:741px;width:14px;height:4px;background:#0a7a1f;"></div>
<div style="left:379px;top:758px;width:1513px;height:1px;background:#555555;"></div>
<div style="left:379px;top:759px;width:1513px;height:22px;background:#313335;"></div>
<div style="left:14px;top:781px;width:1878px;height:1px;background:#323232;"></div>
<div style="left:14px;top:782px;width:1878px;height:26px;background:#3c3f41;"></div>
<span id="t86" style="top:787px;font:12px/18px 'Liberation Sans',sans-serif;color:#bbbbbb;white-space:pre;left:20.5px;letter-spacing:-0.550px;transform-origin:0 50%;transform:scaleX(0.9996);">Run:</span>
<svg style="left:64px;top:788px;" width="15" height="15" viewBox="0 0 14 14"><path d="M6.900 0.300c-3 0-2.900 1.300-2.900 1.300v1.400h3v0.500h-4.200s-2-0.200-2 3c0 3.100 1.800 3 1.800 3h1v-1.500s-0.100-1.800 1.800-1.800h3s1.700 0 1.700-1.700v-2.700s0.300-1.500-3.200-1.500z" fill="#4d9ad4"/><path d="M7.100 13.700c3 0 2.900-1.300 2.900-1.300v-1.400h-3v-0.500h4.200s2 0.200 2-3c0-3.100-1.800-3-1.800-3h-1v1.500s0.100 1.800-1.800 1.800h-3s-1.700 0-1.700 1.700v2.700s-0.300 1.500 3.200 1.500z" fill="#f2c83a"/></svg>
<div style="left:64px;top:779.5px;width:6px;height:1.5px;background:#b9bec2;"></div>
<svg style="left:74px;top:798px;" width="6" height="6" viewBox="0 0 6 6"><circle cx="3" cy="3" r="2.600" fill="#25d125" stroke="#2b4a2b" stroke-width=".6"/></svg>
<span id="t87" style="top:787px;font:12px/18px 'Liberation Sans',sans-serif;color:#bbbbbb;white-space:pre;left:82.8px;letter-spacing:-0.550px;transform-origin:0 50%;transform:scaleX(0.9855);">LTE_Front_Panel_v07</span>
<svg style="left:198.5px;top:792.5px;" width="7" height="7" viewBox="0 0 7 7"><path d="M0.500 0.500l6 6M6.500 0.500l-6 6" stroke="#6e7072" stroke-width="1"/></svg>
<div style="left:51px;top:806px;width:166px;height:3px;background:#83878a;"></div>
<svg style="left:1845px;top:788px;" width="14" height="14" viewBox="0 0 14 14"><g transform="translate(7 7)"><g fill="#afb1b3"><rect x="-1.700" y="-7" width="3.400" height="14" rx=".5"/><rect x="-1.700" y="-7" width="3.400" height="14" rx=".5" transform="rotate(60)"/><rect x="-1.700" y="-7" width="3.400" height="14" rx=".5" transform="rotate(120)"/><circle r="5"/></g><circle r="2.200" fill="#3c3f41"/></g></svg>
<div style="left:1872px;top:794px;width:12px;height:2px;background:#afb1b3;"></div>
<div style="left:72px;top:809px;width:1820px;height:180px;background:#2b2b2b;"></div>
<div style="left:14px;top:808px;width:29px;height:181px;background:#3c3f41;"></div>
<div style="left:42px;top:808px;width:1px;height:181px;background:#323232;"></div>
<div style="left:43px;top:808px;width:28px;height:181px;background:#3c3f41;"></div>
<div style="left:71px;top:808px;width:1px;height:181px;background:#323232;"></div>
<span id="t88" style="top:816px;font:13.33px/19px 'Liberation Mono',monospace;color:#bbbbbb;white-space:pre;left:83px;">Select COM PORT from the drop down</span>
<span id="t89" style="top:838px;font:13.33px/19px 'Liberation Mono',monospace;color:#bbbbbb;white-space:pre;left:83px;">N</span>
<span id="t90" style="top:860px;font:13.33px/19px 'Liberation Mono',monospace;color:#bbbbbb;white-space:pre;left:83px;">Opened COM port: COM13</span>
<span id="t91" style="top:882px;font:13.33px/19px 'Liberation Mono',monospace;color:#bbbbbb;white-space:pre;left:83px;">Modem Response Below:</span>
<div style="left:83px;top:911.6px;width:3px;height:2px;background:#77797b;"></div>
<div style="left:87px;top:911.6px;width:3px;height:2px;background:#77797b;"></div>
<span id="t92" style="top:926px;font:13.33px/19px 'Liberation Mono',monospace;color:#bbbbbb;white-space:pre;left:83px;">Modem Response Below:</span>
<div style="left:83px;top:955.6px;width:3px;height:2px;background:#77797b;"></div>
<div style="left:87px;top:955.6px;width:3px;height:2px;background:#77797b;"></div>
<div style="left:1882px;top:920px;width:8px;height:68px;background:#4d4f50;"></div>
<svg style="left:21px;top:816px;" width="14" height="14" viewBox="0 0 14 14"><path d="M8.500 3.600a4.700 4.700 0 1 0 -1 9.200" fill="none" stroke="#4fa260" stroke-width="2.600"/><path d="M8 0l5.500 3.700l-5.500 3.700z" fill="#4fa260"/><rect x="7.500" y="8.800" width="5.500" height="5.200" fill="#c4c7c9"/></svg>
<svg style="left:21px;top:842px;" width="15" height="15" viewBox="0 0 15 15"><path d="M14 3.800l-2.600 2.600l-2.300-0.500l-0.500-2.300l2.600-2.600c-2-0.700-4 0-5 1.600c-0.800 1.300-0.800 2.700-0.300 3.900l-5.200 5.200c-0.700 0.700-0.700 1.700 0 2.400s1.700 0.700 2.400 0l5.200-5.200c1.200 0.500 2.600 0.500 3.900-0.300c1.600-1 2.300-3 1.800-4.800z" fill="#afb1b3"/></svg>
<div style="left:18px;top:865px;width:21px;height:1px;background:#4b4e50;"></div>
<div style="left:23px;top:876px;width:10.5px;height:10.5px;background:#e5575d;"></div>
<div style="left:18px;top:898px;width:21px;height:1px;background:#4b4e50;"></div>
<svg style="left:22px;top:909px;" width="13" height="11" viewBox="0 0 13 11"><rect x="0" y="0" width="6" height="5" fill="#afb1b3"/><rect x="7" y="0" width="6" height="5" fill="#afb1b3"/><rect x="0" y="6" width="13" height="5" fill="#afb1b3"/></svg>
<div style="left:18px;top:931px;width:21px;height:1px;background:#4b4e50;"></div>
<svg style="left:21px;top:941px;" width="15" height="15" viewBox="0 0 15 15"><path d="M9.500 0.500l5 5l-1.300 0.700l-2.200-0.400l-2.800 2.800l0.300 3.200l-1.200 1.200l-6.300-6.300l1.200-1.200l3.200 0.300l2.800-2.800l-0.400-2.200z" fill="#afb1b3" transform="translate(0 0)"/><path d="M4.200 10.800l-4 4" stroke="#afb1b3" stroke-width="1.500"/></svg>
<svg style="left:52px;top:818px;" width="10" height="13" viewBox="0 0 10 13"><path d="M5 12.500v-11M0.800 5.500l4.200-4.300l4.200 4.300" fill="none" stroke="#5c5f61" stroke-width="1.500"/></svg>
<svg style="left:52px;top:843px;" width="10" height="13" viewBox="0 0 10 13"><path d="M5 0.500v11M0.800 7.500l4.200 4.300l4.200-4.300" fill="none" stroke="#5c5f61" stroke-width="1.500"/></svg>
<svg style="left:50px;top:869px;" width="14" height="14" viewBox="0 0 14 14"><path d="M1 1.500h12M1 6.500h9.500a2.500 2.500 0 0 1 0 5.500h-4" fill="none" stroke="#afb1b3" stroke-width="1.500"/><path d="M7.800 9.300l-2.800 2.700l2.800 2.700z" fill="#afb1b3"/><path d="M1 12h2.500" stroke="#afb1b3" stroke-width="1.500"/></svg>
<div style="left:46px;top:891px;width:22px;height:22px;background:#4c5052;border-radius:3px;"></div>
<svg style="left:50px;top:895px;" width="14" height="14" viewBox="0 0 14 14"><path d="M0.500 3h5M0.500 7h5M0.500 12.500h13" stroke="#afb1b3" stroke-width="1.500"/><path d="M10 0.500v8M6.800 6l3.200 3.500l3.200-3.500" fill="none" stroke="#afb1b3" stroke-width="1.500"/></svg>
<svg style="left:50px;top:921px;" width="14" height="14" viewBox="0 0 14 14"><rect x="3" y="0.500" width="8" height="3" fill="#afb1b3"/><path d="M0.500 5h13v6h-2.500v-3h-8v3h-2.500z" fill="#afb1b3"/><rect x="3.800" y="9.500" width="6.400" height="4" fill="none" stroke="#afb1b3" stroke-width="1.200"/></svg>
<svg style="left:51px;top:946px;" width="12" height="14" viewBox="0 0 12 14"><path d="M4 0h4v1.500h3.500v2h-11v-2h3.500z" fill="#afb1b3"/><path d="M1.500 4.500h9v9.500h-9z" fill="#afb1b3"/></svg>
<div style="left:0px;top:989px;width:1912px;height:18px;background:#3c3f41;"></div>
<div style="left:0px;top:989px;width:1912px;height:1px;background:#323232;"></div>
<div style="left:63px;top:990px;width:56px;height:17px;background:#2d2f30;"></div>
<svg style="left:24px;top:996px;" width="9" height="11" viewBox="0 0 9 11"><path d="M2 0.500v10.500M2 8c4 0 5-1.500 5-4.500" fill="none" stroke="#afb1b3" stroke-width="1.400"/><circle cx="2" cy="1.800" r="1.600" fill="#afb1b3"/><circle cx="7" cy="2.800" r="1.600" fill="#afb1b3"/></svg>
<span id="t93" style="top:994px;font:12px/18px 'Liberation Sans',sans-serif;color:#bbbbbb;white-space:pre;left:39.5px;letter-spacing:-0.322px;">Git</span>
<svg style="left:74px;top:996px;" width="9" height="11" viewBox="0 0 9 11"><path d="M0 0l9 5.500l-9 5.500z" fill="#c9cbcc"/></svg>
<svg style="left:79px;top:1003px;" width="6" height="6" viewBox="0 0 6 6"><circle cx="3" cy="3" r="2.500" fill="#25d125"/></svg>
<span id="t94" style="top:994px;font:12px/18px 'Liberation Sans',sans-serif;color:#ffffff;white-space:pre;left:89.5px;letter-spacing:-0.550px;transform-origin:0 50%;transform:scaleX(0.9897);">Run</span>
<svg style="left:133px;top:995px;" width="13" height="13" viewBox="0 0 13 13"><path d="M6.500 0l6.500 3.200l-6.500 3.200l-6.500-3.200z" fill="#afb1b3"/><path d="M0.500 6.300l6 3l6-3M0.500 9.300l6 3l6-3" fill="none" stroke="#afb1b3" stroke-width="1.300"/></svg>
<span id="t95" style="top:994px;font:12px/18px 'Liberation Sans',sans-serif;color:#bbbbbb;white-space:pre;left:149.5px;letter-spacing:-0.515px;">Python Packages</span>
<svg style="left:258px;top:997px;" width="11" height="9" viewBox="0 0 11 9"><path d="M3.500 1h7.500M3.500 4.500h7.500M3.500 8h7.500" stroke="#afb1b3" stroke-width="1.500"/><path d="M0 1h2M0 4.500h2M0 8h2" stroke="#afb1b3" stroke-width="1.500"/></svg>
<span id="t96" style="top:994px;font:12px/18px 'Liberation Sans',sans-serif;color:#bbbbbb;white-space:pre;left:273.5px;letter-spacing:-0.550px;transform-origin:0 50%;transform:scaleX(0.9969);">TODO</span>
<svg style="left:327px;top:996px;" width="12" height="12" viewBox="0 0 14 14"><path d="M6.900 0.300c-3 0-2.900 1.300-2.900 1.300v1.400h3v0.500h-4.200s-2-0.200-2 3c0 3.100 1.800 3 1.800 3h1v-1.500s-0.100-1.800 1.800-1.800h3s1.700 0 1.700-1.700v-2.700s0.300-1.500-3.200-1.500z" fill="#afb1b3"/><path d="M7.100 13.700c3 0 2.900-1.300 2.900-1.300v-1.400h-3v-0.500h4.200s2 0.200 2-3c0-3.100-1.800-3-1.800-3h-1v1.500s0.100 1.800-1.800 1.800h-3s-1.700 0-1.700 1.700v2.700s-0.300 1.500 3.200 1.500z" fill="#8f9294"/></svg>
<span id="t97" style="top:994px;font:12px/18px 'Liberation Sans',sans-serif;color:#bbbbbb;white-space:pre;left:343.5px;letter-spacing:-0.233px;">Python Console</span>
<svg style="left:448px;top:995px;" width="11" height="11" viewBox="0 0 11 11"><circle cx="5.500" cy="5.500" r="5.500" fill="#afb1b3"/><path d="M5.500 2.300v4" stroke="#3c3f41" stroke-width="1.600"/><rect x="4.700" y="7.500" width="1.600" height="1.600" fill="#3c3f41"/></svg>
<span id="t98" style="top:994px;font:12px/18px 'Liberation Sans',sans-serif;color:#bbbbbb;white-space:pre;left:464.0px;letter-spacing:-0.498px;">Problems</span>
<svg style="left:533px;top:996px;" width="12" height="11" viewBox="0 0 12 11"><rect x="0" y="0" width="12" height="11" fill="#afb1b3"/><path d="M2 2.500l3 2.500l-3 2.500M6 8.500h4" fill="none" stroke="#3c3f41" stroke-width="1.300"/></svg>
<span id="t99" style="top:994px;font:12px/18px 'Liberation Sans',sans-serif;color:#bbbbbb;white-space:pre;left:550.0px;letter-spacing:-0.094px;">Terminal</span>
<svg style="left:614px;top:995px;" width="13" height="13" viewBox="0 0 13 13"><circle cx="6.500" cy="6.500" r="6" fill="#afb1b3"/><path d="M4.700 3.200l5 3.300l-5 3.300z" fill="#3c3f41"/></svg>
<span id="t100" style="top:994px;font:12px/18px 'Liberation Sans',sans-serif;color:#bbbbbb;white-space:pre;left:632.0px;letter-spacing:-0.550px;transform-origin:0 50%;transform:scaleX(0.9534);">Services</span>
<div style="left:0px;top:50px;width:13px;height:70px;background:#2d2f30;"></div>
<span style="left:4.8px;top:93.5px;font:11px/14px 'Liberation Sans',sans-serif;color:#ffffff;white-space:pre;transform-origin:0 0;transform:rotate(-90deg) translateY(-7px);letter-spacing:-0.200px;">Project</span>
<svg style="left:0px;top:99px;" width="10" height="10" viewBox="0 0 10 10"><path d="M0 0h3l1.200 1.500h5.300v8h-9.500z" fill="#afb1b3"/></svg>
<span style="left:4.8px;top:200.5px;font:11px/14px 'Liberation Sans',sans-serif;color:#bbbbbb;white-space:pre;transform-origin:0 0;transform:rotate(-90deg) translateY(-7px);letter-spacing:0.020px;">Pull Requests</span>
<svg style="left:0px;top:206px;" width="10" height="11" viewBox="0 0 10 11"><path d="M8 10.500v-6.500h-5M5.500 1l-3 3l3 3" fill="none" stroke="#afb1b3" stroke-width="1.700"/><path d="M1 5v5.500" stroke="#afb1b3" stroke-width="1.700"/></svg>
<span style="left:4.5px;top:874.5px;font:11px/14px 'Liberation Sans',sans-serif;color:#bbbbbb;white-space:pre;transform-origin:0 0;transform:rotate(-90deg) translateY(-7px);letter-spacing:0.000px;">Bookmarks</span>
<svg style="left:0px;top:880px;" width="9" height="13" viewBox="0 0 9 13"><path d="M0 0h8.500v12.500l-4.500-3.500l-4 3.200z" fill="#afb1b3"/></svg>
<span style="left:4.5px;top:960.5px;font:11px/14px 'Liberation Sans',sans-serif;color:#bbbbbb;white-space:pre;transform-origin:0 0;transform:rotate(-90deg) translateY(-7px);letter-spacing:0.200px;">Structure</span>
<svg style="left:0px;top:966px;" width="10" height="11" viewBox="0 0 10 11"><rect x="0" y="6.500" width="4" height="4" fill="#afb1b3"/><rect x="5.500" y="6.500" width="4" height="4" fill="#afb1b3"/><rect x="5.500" y="0.500" width="4" height="4.500" fill="#afb1b3"/><rect x="0" y="3" width="4" height="2" fill="#afb1b3"/></svg>
<div style="left:1891px;top:50px;width:21px;height:939px;background:#3c3f41;"></div>
<div style="left:1891px;top:50px;width:1px;height:939px;background:#323232;"></div>
<svg style="left:1897px;top:61.4px;" width="11" height="13" viewBox="0 0 11 13"><path d="M5.500 0c2.600 0 4.200 2 4.200 4.500v3.500l1.300 2h-11l1.300-2v-3.500c0-2.500 1.600-4.500 4.200-4.500z" fill="#afb1b3"/><rect x="4" y="11" width="3" height="1.800" fill="#afb1b3"/></svg>
<span style="left:1900.9px;top:78px;font:11px/14px 'Liberation Sans',sans-serif;color:#bbbbbb;white-space:pre;transform-origin:0 0;transform:rotate(90deg) translateY(-7px);letter-spacing:0.100px;">Notifications</span>
<div style="left:360px;top:149px;width:1212px;height:682px;box-shadow:0 0 4px rgba(0,0,0,.45);background:#2a2a2a;"></div>
<div style="left:361px;top:150px;width:1210px;height:680px;background:#f0f0f0;"></div>
<div style="left:361px;top:150px;width:1210px;height:31px;background:#ffffff;"></div>
<svg style="left:372px;top:155px;" width="10" height="18" viewBox="0 0 10 18"><path d="M8.800 1c0.600 2.500-0.300 6.500-4.800 11.300l-2.800-1.500c-0.300-2.800 1.200-5.300 3-7.200c1.500-1.500 3-2.400 4.600-2.600z" fill="#8598bd"/><path d="M8.800 1c-1.600 0.200-3.100 1.100-4.600 2.600c-1.800 1.900-3.300 4.400-3 7.200v2l2.400-1.200" fill="none" stroke="#0c0f18" stroke-width="1"/><path d="M3.600 10.500v6" stroke="#0c0f18" stroke-width="1.300"/><path d="M5.200 4.200l0.100 0.100M4 6.200l0.100 0.100M6.300 5.800l0.100 0.100M3 8.300l0.100 0.100M5.200 8l0.100 0.100M7.400 3.500l0.100 0.100M4.300 10l0.100 0.100" stroke="#1a2238" stroke-width="1.100" stroke-linecap="round"/></svg>
<span id="t101" style="top:156px;font:12px/18px 'Liberation Sans',sans-serif;color:#000000;white-space:pre;left:390.0px;letter-spacing:-0.065px;">LTE Modem Communication Serial Interface</span>
<div style="left:1452px;top:164px;width:10px;height:1px;background:#000000;"></div>
<div style="left:1497px;top:159px;width:10px;height:10px;border:1px solid #000;"></div>
<svg style="left:1543px;top:159px;" width="10" height="10" viewBox="0 0 10 10"><path d="M0.300 0.300l9.400 9.400M9.700 0.300l-9.400 9.400" stroke="#000" stroke-width="1.100"/></svg>
<div style="left:363px;top:202px;width:1206px;height:1px;background:#d9d9d9;"></div>
<div style="left:363px;top:203px;width:1px;height:624px;background:#e2e2e2;"></div>
<div style="left:1568px;top:203px;width:1px;height:624px;background:#d9d9d9;"></div>
<div style="left:363px;top:826px;width:1206px;height:1px;background:#e0e0e0;"></div>
<div style="left:1569px;top:181px;width:2px;height:649px;background:#ffffff;"></div>
<div style="left:361px;top:181px;width:2px;height:649px;background:#ffffff;"></div>
<div style="left:361px;top:827px;width:1210px;height:3px;background:#ffffff;"></div>
<div style="left:363px;top:183px;width:109px;height:20px;background:#f0f0f0;border:1px solid #d9d9d9;border-bottom:none;"></div>
<span id="t102" style="top:185px;font:12px/18px 'Liberation Sans',sans-serif;color:#000;white-space:pre;left:367.5px;letter-spacing:-0.550px;transform-origin:0 50%;transform:scaleX(0.9545);">COM PORT SELECT</span>
<div style="left:471px;top:183px;width:113px;height:20px;background:#f0f0f0;border:1px solid #d9d9d9;border-bottom:none;"></div>
<span id="t103" style="top:185px;font:12px/18px 'Liberation Sans',sans-serif;color:#000;white-space:pre;left:476.0px;letter-spacing:-0.422px;">SINGLE COMMAND</span>
<div style="left:732px;top:183px;width:122px;height:20px;background:#f0f0f0;border:1px solid #d9d9d9;border-bottom:none;"></div>
<span id="t104" style="top:185px;font:12px/18px 'Liberation Sans',sans-serif;color:#000;white-space:pre;left:735.5px;letter-spacing:-0.443px;">RUN COMMAND FILE</span>
<div style="left:853px;top:183px;width:83px;height:20px;background:#f0f0f0;border:1px solid #d9d9d9;border-bottom:none;"></div>
<span id="t105" style="top:185px;font:12px/18px 'Liberation Sans',sans-serif;color:#000;white-space:pre;left:858.0px;letter-spacing:-0.550px;transform-origin:0 50%;transform:scaleX(0.9678);">DIAGNOSTICS</span>
<div style="left:935px;top:183px;width:66px;height:20px;background:#f0f0f0;border:1px solid #d9d9d9;border-bottom:none;"></div>
<span id="t106" style="top:185px;font:12px/18px 'Liberation Sans',sans-serif;color:#000;white-space:pre;left:940.0px;letter-spacing:-0.514px;">PPP Frame</span>
<div style="left:583px;top:181px;width:150px;height:22px;background:#ffffff;border:1px solid #d9d9d9;border-bottom:none;"></div>
<span id="t107" style="top:183px;font:12px/18px 'Liberation Sans',sans-serif;color:#000;white-space:pre;left:589.5px;letter-spacing:-0.297px;">DROP DOWN COMMAND</span>
<span id="t108" style="top:227px;font:bold 13.33px/19px 'Liberation Sans',sans-serif;color:#000;white-space:pre;left:369.5px;letter-spacing:-0.136px;">Run List A Command</span>
<div style="left:367px;top:246px;width:154px;height:30px;background:#f0f0f0;border:2px solid;border-color:#ffffff #696969 #696969 #ffffff;"></div>
<div style="left:369px;top:248px;width:150px;height:26px;border:2px solid;border-color:#e8e8e8 #a0a0a0 #a0a0a0 #e8e8e8;"></div>
<span id="t109" style="top:252px;font:12px/18px 'Liberation Sans',sans-serif;color:#000;white-space:pre;left:443.5px;letter-spacing:-0.408px;transform:translateX(-50%);">Run</span>
<span id="t110" style="top:227px;font:bold 13.33px/19px 'Liberation Sans',sans-serif;color:#000;white-space:pre;left:533.5px;letter-spacing:-0.080px;">List A of AT+ Commands</span>
<div style="left:533px;top:246px;width:434px;height:39px;background:#ffffff;border:1px solid #2a7cc0;"></div>
<div style="left:536px;top:258px;width:79px;height:15px;background:#0078d7;"></div>
<span id="t111" style="top:257px;font:12px/18px 'Liberation Sans',sans-serif;color:#ffffff;white-space:pre;left:537.0px;letter-spacing:-0.195px;">AT+QNWINFO</span>
<svg style="left:953px;top:262.7px;" width="10" height="6" viewBox="0 0 10 6"><path d="M0.800 0.800l4.200 4.200l4.200-4.200" fill="none" stroke="#444" stroke-width="1.100"/></svg>
<span id="t112" style="top:296px;font:bold 13.33px/19px 'Liberation Sans',sans-serif;color:#000;white-space:pre;left:369.5px;letter-spacing:-0.195px;">Run List B Command</span>
<div style="left:367px;top:315px;width:154px;height:30px;background:#f0f0f0;border:2px solid;border-color:#ffffff #696969 #696969 #ffffff;"></div>
<div style="left:369px;top:317px;width:150px;height:26px;border:2px solid;border-color:#e8e8e8 #a0a0a0 #a0a0a0 #e8e8e8;"></div>
<span id="t113" style="top:321px;font:12px/18px 'Liberation Sans',sans-serif;color:#000;white-space:pre;left:443.5px;letter-spacing:-0.408px;transform:translateX(-50%);">Run</span>
<span id="t114" style="top:296px;font:bold 13.33px/19px 'Liberation Sans',sans-serif;color:#000;white-space:pre;left:533.5px;letter-spacing:-0.127px;">List B of AT+ Commands</span>
<div style="left:533px;top:315px;width:434px;height:39px;background:#ffffff;border:1px solid #7a7a7a;"></div>
<span id="t115" style="top:326px;font:12px/18px 'Liberation Sans',sans-serif;color:#000;white-space:pre;left:536.3px;letter-spacing:-0.550px;transform-origin:0 50%;transform:scaleX(0.9884);">AT+CSQ</span>
<svg style="left:953px;top:331.7px;" width="10" height="6" viewBox="0 0 10 6"><path d="M0.800 0.800l4.200 4.200l4.200-4.200" fill="none" stroke="#444" stroke-width="1.100"/></svg>
<span id="t116" style="top:365px;font:bold 13.33px/19px 'Liberation Sans',sans-serif;color:#000;white-space:pre;left:369.5px;letter-spacing:-0.195px;">Run List C Command</span>
<div style="left:367px;top:384px;width:154px;height:30px;background:#f0f0f0;border:2px solid;border-color:#ffffff #696969 #696969 #ffffff;"></div>
<div style="left:369px;top:386px;width:150px;height:26px;border:2px solid;border-color:#e8e8e8 #a0a0a0 #a0a0a0 #e8e8e8;"></div>
<span id="t117" style="top:390px;font:12px/18px 'Liberation Sans',sans-serif;color:#000;white-space:pre;left:443.5px;letter-spacing:-0.408px;transform:translateX(-50%);">Run</span>
<span id="t118" style="top:365px;font:bold 13.33px/19px 'Liberation Sans',sans-serif;color:#000;white-space:pre;left:533.5px;letter-spacing:-0.127px;">List C of AT+ Commands</span>
<div style="left:533px;top:384px;width:434px;height:39px;background:#ffffff;border:1px solid #7a7a7a;"></div>
<span id="t119" style="top:395px;font:12px/18px 'Liberation Sans',sans-serif;color:#000;white-space:pre;left:536.3px;letter-spacing:-0.550px;transform-origin:0 50%;transform:scaleX(0.9884);">AT+CSQ</span>
<svg style="left:953px;top:400.7px;" width="10" height="6" viewBox="0 0 10 6"><path d="M0.800 0.800l4.200 4.200l4.200-4.200" fill="none" stroke="#444" stroke-width="1.100"/></svg>
<div style="left:368px;top:444px;width:600px;height:30px;background:#f0f0f0;border:1px solid;border-color:#8c8c8c #ffffff #ffffff #8c8c8c;"></div>
<div style="left:369px;top:445px;width:598px;height:28px;border:1px solid;border-color:#696969 #e6e6e6 #e6e6e6 #696969;"></div>
<span id="t120" style="top:449px;font:14px/20px 'Liberation Sans',sans-serif;color:#1a1a8c;white-space:pre;left:667.3px;letter-spacing:-0.550px;transform:translateX(-50%) scaleX(0.9381);">Note</span>
<div style="left:367px;top:505px;width:154px;height:30px;background:#f0f0f0;border:2px solid;border-color:#ffffff #696969 #696969 #ffffff;"></div>
<div style="left:369px;top:507px;width:150px;height:26px;border:2px solid;border-color:#e8e8e8 #a0a0a0 #a0a0a0 #e8e8e8;"></div>
<span id="t121" style="top:511px;font:12px/18px 'Liberation Sans',sans-serif;color:#000;white-space:pre;left:443.5px;letter-spacing:-0.272px;transform:translateX(-50%);">Exit</span>
<div style="left:531px;top:513px;width:165px;height:22px;background:#f0f0f0;border:1px solid;border-color:#8c8c8c #ffffff #ffffff #8c8c8c;"></div>
<div style="left:532px;top:514px;width:163px;height:20px;border:1px solid;border-color:#696969 #e6e6e6 #e6e6e6 #696969;"></div>
<span id="t122" style="top:514px;font:14px/20px 'Liberation Sans',sans-serif;color:#1a1a8c;white-space:pre;left:614.5px;letter-spacing:-0.550px;transform:translateX(-50%) scaleX(0.9516);">14:00:37</span>
<span id="t123" style="top:226px;font:bold 13.33px/19px 'Liberation Sans',sans-serif;color:#000;white-space:pre;left:982.0px;letter-spacing:-0.105px;">Modem Response</span>
<div style="left:979px;top:250px;width:564px;height:405px;background:#ffffff;border-left:1px solid #828282;border-top:2px solid #828282;border-top-color:#8e8e8e;"></div>
<div style="left:979px;top:250px;width:564px;height:1px;background:#f0f0f0;"></div>
<div style="left:1548px;top:250px;width:1px;height:408px;background:#ffffff;"></div>
<svg style="left:1553px;top:252px;" width="8" height="6" viewBox="0 0 8 6"><path d="M0.500 5.500l3.500-4l3.500 4" fill="none" stroke="#a6a6a6" stroke-width="1.800"/></svg>
<svg style="left:1553px;top:649px;" width="7.5" height="6" viewBox="0 0 7.5 6"><path d="M0.500 0.500l3.250 4l3.250-4" fill="none" stroke="#a9a9a9" stroke-width="1.800"/></svg>
<div style="left:975px;top:660px;width:576px;height:1px;background:#ffffff;"></div>
<svg style="left:979px;top:664px;" width="6" height="8" viewBox="0 0 6 8"><path d="M5.500 0.500l-4 3.500l4 3.500" fill="none" stroke="#a6a6a6" stroke-width="1.800"/></svg>
<svg style="left:1536px;top:664px;" width="6" height="8" viewBox="0 0 6 8"><path d="M0.500 0.500l4 3.500l-4 3.500" fill="none" stroke="#a6a6a6" stroke-width="1.800"/></svg>
<span id="t124" style="top:701px;font:bold 13.33px/19px 'Liberation Sans',sans-serif;color:#000;white-space:pre;left:370.0px;letter-spacing:0.001px;">Add New AT+ Command to List A</span>
<span id="t125" style="top:701px;font:bold 13.33px/19px 'Liberation Sans',sans-serif;color:#000;white-space:pre;left:710.0px;letter-spacing:-0.089px;">Add New Command Description to List A</span>
<div style="left:367px;top:721px;width:330px;height:30px;background:#35fba7;border:2px solid;border-color:#4b7d66 #30dc9a #30dc9a #4b7d66;"></div>
<div style="left:369px;top:723px;width:326px;height:26px;background:#35fba7;border:2px solid;border-color:#001a08 #35fba7 #35fba7 #001a08;"></div>
<div style="left:707px;top:721px;width:437px;height:30px;background:#35fba7;border:2px solid;border-color:#4b7d66 #30dc9a #30dc9a #4b7d66;"></div>
<div style="left:709px;top:723px;width:433px;height:26px;background:#35fba7;border:2px solid;border-color:#001a08 #35fba7 #35fba7 #001a08;"></div>
<div style="left:1154px;top:721px;width:154px;height:30px;background:#f0f0f0;border:2px solid;border-color:#ffffff #696969 #696969 #ffffff;"></div>
<div style="left:1156px;top:723px;width:150px;height:26px;border:2px solid;border-color:#e8e8e8 #a0a0a0 #a0a0a0 #e8e8e8;"></div>
<span id="t126" style="top:727px;font:12px/18px 'Liberation Sans',sans-serif;color:#000;white-space:pre;left:1230.5px;letter-spacing:0.252px;transform:translateX(-50%);">Add AT+ Command</span>
<span id="t127" style="top:753px;font:bold 13.33px/19px 'Liberation Sans',sans-serif;color:#000;white-space:pre;left:370.0px;letter-spacing:-0.017px;">Add New AT+ Command to List B</span>
<span id="t128" style="top:753px;font:bold 13.33px/19px 'Liberation Sans',sans-serif;color:#000;white-space:pre;left:710.0px;letter-spacing:-0.103px;">Add New Command Description to List B</span>
<div style="left:367px;top:773px;width:330px;height:30px;background:#35fba7;border:2px solid;border-color:#4b7d66 #30dc9a #30dc9a #4b7d66;"></div>
<div style="left:369px;top:775px;width:326px;height:26px;background:#35fba7;border:2px solid;border-color:#001a08 #35fba7 #35fba7 #001a08;"></div>
<div style="left:707px;top:773px;width:437px;height:30px;background:#35fba7;border:2px solid;border-color:#4b7d66 #30dc9a #30dc9a #4b7d66;"></div>
<div style="left:709px;top:775px;width:433px;height:26px;background:#35fba7;border:2px solid;border-color:#001a08 #35fba7 #35fba7 #001a08;"></div>
<div style="left:1154px;top:773px;width:154px;height:30px;background:#f0f0f0;border:2px solid;border-color:#ffffff #696969 #696969 #ffffff;"></div>
<div style="left:1156px;top:775px;width:150px;height:26px;border:2px solid;border-color:#e8e8e8 #a0a0a0 #a0a0a0 #e8e8e8;"></div>
<span id="t129" style="top:779px;font:12px/18px 'Liberation Sans',sans-serif;color:#000;white-space:pre;left:1230.5px;letter-spacing:0.252px;transform:translateX(-50%);">Add AT+ Command</span>
<div style="left:630px;top:283px;width:689px;height:20px;background:#ffff00;border:1px solid #000;"></div>
<span id="t130" style="top:283px;font:13px/19px 'Liberation Sans',sans-serif;color:#000;white-space:pre;left:633.3px;letter-spacing:0.037px;">The command indicates network information such as access technology selected, the operator and the. band selected</span>
</div></body></html>
